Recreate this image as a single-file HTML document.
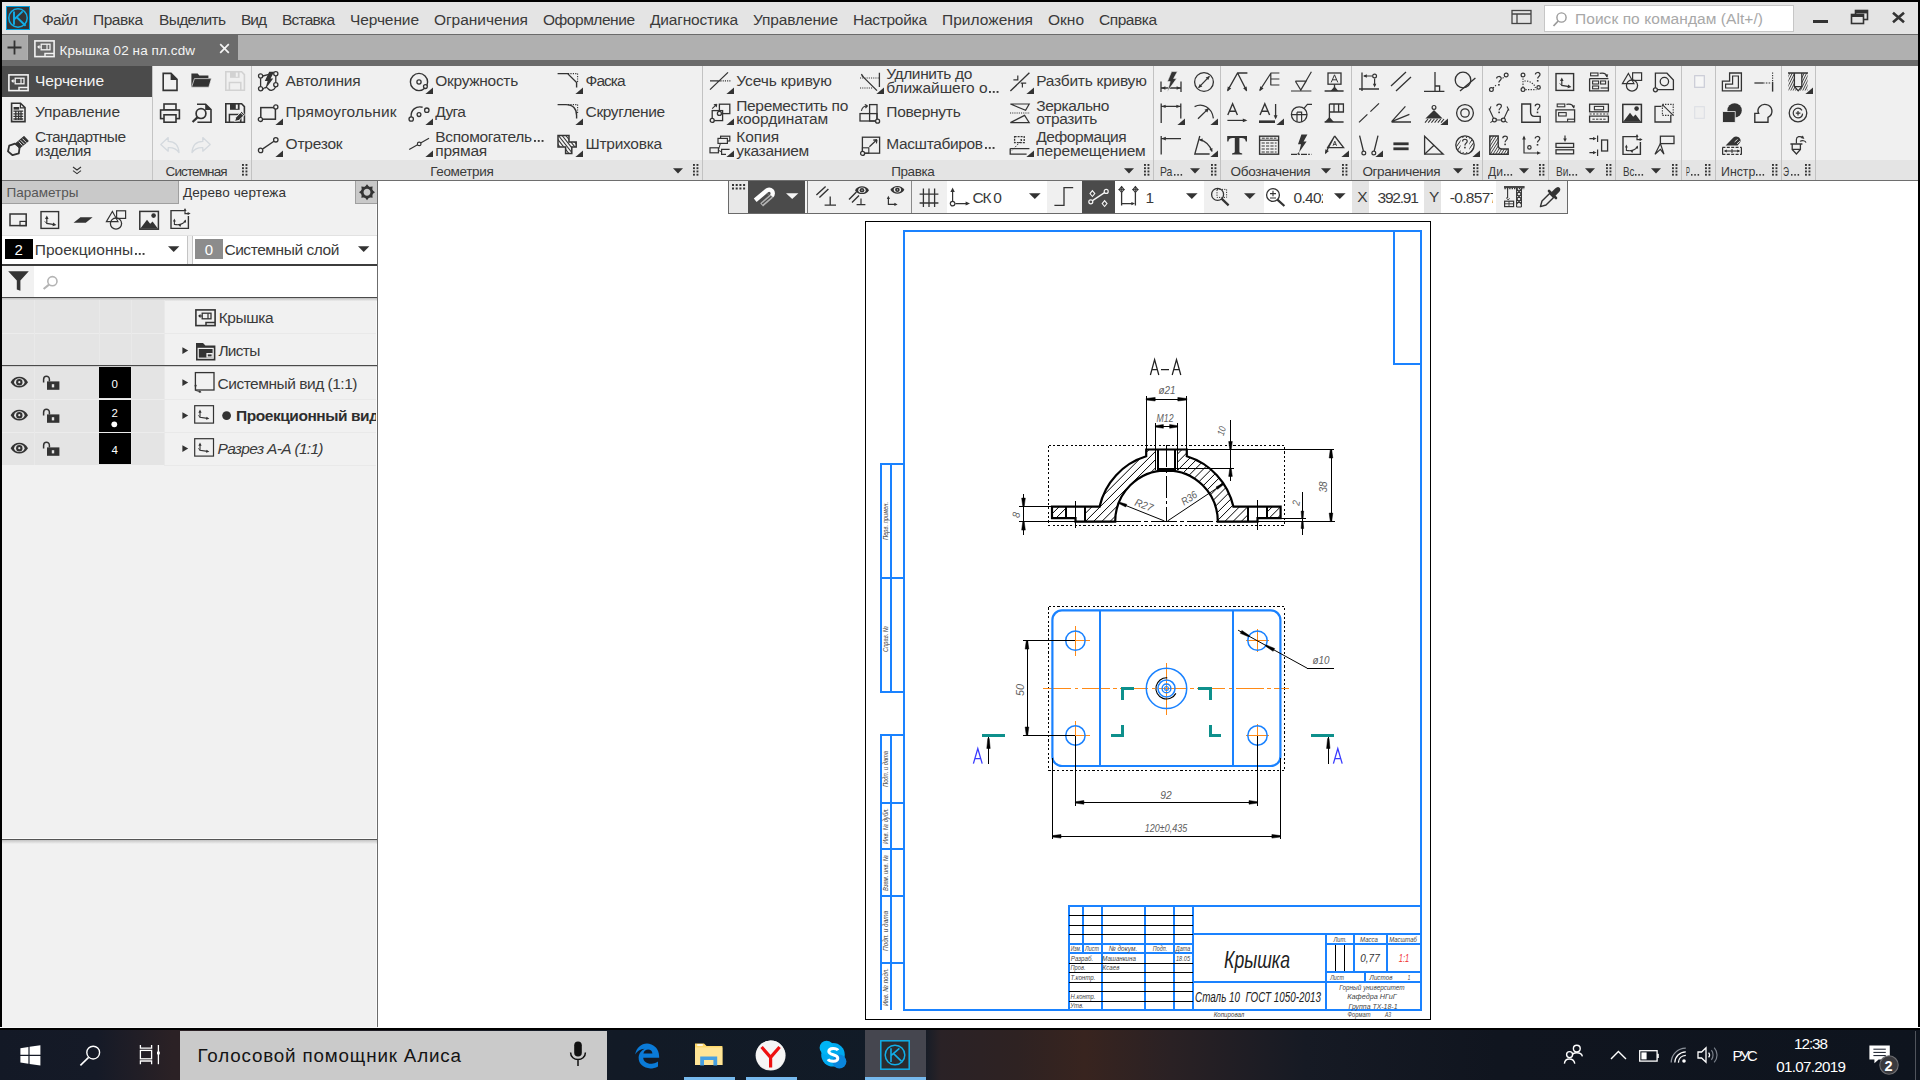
<!DOCTYPE html>
<html><head><meta charset="utf-8"><title>KOMPAS</title>
<style>
html,body{margin:0;padding:0;}
body{width:1920px;height:1080px;overflow:hidden;position:relative;background:#000;font-family:"Liberation Sans",sans-serif;color:#333;}
.t{position:absolute;white-space:nowrap;line-height:1.2;}
.r{position:absolute;display:block;}
svg{overflow:visible;}
.i{fill:none;stroke:#333;stroke-width:1.4;}
.f{fill:#333;stroke:none;}
</style></head><body>
<div class="r" style="left:2px;top:2px;width:1916px;height:32px;background:#e4e4e4;"></div>
<div class="r" style="left:2px;top:34px;width:1916px;height:1px;background:#6b6b6b;"></div>
<div class="r" style="left:2px;top:35px;width:1916px;height:25px;background:#b0b0b0;"></div>
<div class="r" style="left:2px;top:60px;width:1916px;height:6px;background:#6b6b6b;"></div>
<div class="r" style="left:28px;top:34px;width:210px;height:32px;background:#6b6b6b;"></div>
<div class="r" style="left:2px;top:35px;width:25px;height:25px;background:#a9a9a9;"></div>
<div class="r" style="left:2px;top:66px;width:1916px;height:94px;background:#f0f0f0;"></div>
<div class="r" style="left:2px;top:160px;width:1916px;height:20px;background:#e4e4e4;"></div>
<div class="r" style="left:2px;top:180px;width:1916px;height:1px;background:#6e6e6e;"></div>
<div class="r" style="left:2px;top:181px;width:376px;height:847px;background:#f0f0f0;"></div>
<div class="r" style="left:378px;top:181px;width:1540px;height:847px;background:#ffffff;"></div>
<div class="r" style="left:377px;top:181px;width:1px;height:847px;background:#8a8a8a;"></div>
<svg class="r" style="left:6px;top:6px;" width="24" height="24" viewBox="0 0 24 24"><rect x="0" y="0" width="24" height="24" fill="#00a0e0"/><rect x="1" y="1" width="22" height="22" fill="#333538"/>
<circle cx="12" cy="12" r="9.2" fill="none" stroke="#12aee8" stroke-width="1.5"/>
<path d="M8 5.4V18.8M8.2 13.4L16.6 5.4M10.8 11.2L19.6 19.8" fill="none" stroke="#12aee8" stroke-width="1.9"/></svg>
<span class="t" style="left:42px;top:10.88px;font-size:15.5px;letter-spacing:-0.702px;color:#3a3a3a;">Файл</span>
<span class="t" style="left:93px;top:10.88px;font-size:15.5px;letter-spacing:-0.472px;color:#3a3a3a;">Правка</span>
<span class="t" style="left:159px;top:10.88px;font-size:15.5px;letter-spacing:-0.644px;color:#3a3a3a;">Выделить</span>
<span class="t" style="left:241px;top:10.88px;font-size:15.5px;letter-spacing:-1.020px;color:#3a3a3a;">Вид</span>
<span class="t" style="left:282px;top:10.88px;font-size:15.5px;letter-spacing:-0.768px;color:#3a3a3a;">Вставка</span>
<span class="t" style="left:350px;top:10.88px;font-size:15.5px;letter-spacing:-0.109px;color:#3a3a3a;">Черчение</span>
<span class="t" style="left:434px;top:10.88px;font-size:15.5px;letter-spacing:-0.047px;color:#3a3a3a;">Ограничения</span>
<span class="t" style="left:543px;top:10.88px;font-size:15.5px;letter-spacing:-0.468px;color:#3a3a3a;">Оформление</span>
<span class="t" style="left:650px;top:10.88px;font-size:15.5px;letter-spacing:-0.186px;color:#3a3a3a;">Диагностика</span>
<span class="t" style="left:753px;top:10.88px;font-size:15.5px;letter-spacing:-0.129px;color:#3a3a3a;">Управление</span>
<span class="t" style="left:853px;top:10.88px;font-size:15.5px;letter-spacing:-0.288px;color:#3a3a3a;">Настройка</span>
<span class="t" style="left:942px;top:10.88px;font-size:15.5px;letter-spacing:0.035px;color:#3a3a3a;">Приложения</span>
<span class="t" style="left:1048px;top:10.88px;font-size:15.5px;letter-spacing:-0.006px;color:#3a3a3a;">Окно</span>
<span class="t" style="left:1099px;top:10.88px;font-size:15.5px;letter-spacing:-0.467px;color:#3a3a3a;">Справка</span>
<svg class="r" style="left:1511px;top:8px;" width="22" height="18" viewBox="0 0 22 18"><rect x="1" y="2.5" width="19" height="13" fill="none" stroke="#444" stroke-width="1.3"/><path d="M1 6H20M6 6V15.5" stroke="#444" stroke-width="1.3" fill="none"/></svg>
<div class="r" style="left:1544px;top:4.5px;width:250px;height:27px;background:#c6c6c6;"></div>
<div class="r" style="left:1545px;top:5.5px;width:248px;height:25px;background:#ffffff;"></div>
<svg class="r" style="left:1552px;top:10px;" width="16" height="18" viewBox="0 0 16 18"><circle cx="9.5" cy="7.5" r="4.6" fill="none" stroke="#9a9a9a" stroke-width="1.4"/><path d="M6.2 11L1.5 16" stroke="#9a9a9a" stroke-width="1.8"/></svg>
<span class="t" style="left:1575px;top:9.58px;font-size:15.5px;letter-spacing:0.067px;color:#a8a8a8;">Поиск по командам (Alt+/)</span>
<div class="r" style="left:1813px;top:20px;width:15px;height:3px;background:#333;"></div>
<svg class="r" style="left:1850px;top:9px;" width="20" height="16" viewBox="0 0 20 16"><rect x="5.5" y="1.5" width="12" height="9" fill="#e4e4e4" stroke="#333" stroke-width="1.6"/><rect x="5" y="1" width="13" height="3.4" fill="#333"/><rect x="1.5" y="5.5" width="12" height="9" fill="#e4e4e4" stroke="#333" stroke-width="1.6"/><rect x="1" y="5" width="13" height="3" fill="#333"/></svg>
<svg class="r" style="left:1892px;top:12px;" width="13" height="11" viewBox="0 0 13 11"><path d="M1 0.8L12 10.2M12 0.8L1 10.2" stroke="#333" stroke-width="2.6" fill="none"/></svg>
<svg class="r" style="left:2px;top:35px;" width="25" height="25" viewBox="0 0 25 25"><path d="M12.5 5.5V19.5M5.5 12.5H19.5" stroke="#333" stroke-width="1.8" fill="none"/></svg>
<svg class="r" style="left:34px;top:39.5px;" width="21" height="18" viewBox="0 0 21 18"><rect x="0.9" y="0.9" width="19.2" height="15.7" fill="none" stroke="#f2f2f2" stroke-width="1.6"/><rect x="7.2" y="4.2" width="8.8" height="5.6" fill="none" stroke="#f2f2f2" stroke-width="1.3"/><path d="M3.6 7H7.2M3.6 7L5.6 5.6M3.6 7L5.6 8.4" stroke="#f2f2f2" stroke-width="1.1" fill="none"/><path d="M13 4.2V9.8" stroke="#f2f2f2" stroke-width="1.2"/><path d="M11 16.4V13.4H20" stroke="#f2f2f2" stroke-width="1.5" fill="none"/></svg>
<span class="t" style="left:59.5px;top:42.67px;font-size:13.5px;letter-spacing:0.095px;color:#f4f4f4;">Крышка 02 на пл.cdw</span>
<svg class="r" style="left:219px;top:43px;" width="11" height="11" viewBox="0 0 11 11"><path d="M1.2 1.2L9.8 9.8M9.8 1.2L1.2 9.8" stroke="#f4f4f4" stroke-width="1.7" fill="none"/></svg>
<div class="r" style="left:2px;top:66px;width:150px;height:31px;background:#4b4b4b;"></div>
<div class="r" style="left:152px;top:66px;width:1px;height:114px;background:#c4c4c4;"></div>
<svg class="r" style="left:8px;top:73.5px;" width="21" height="18" viewBox="0 0 21 18"><rect x="0.9" y="0.9" width="19.2" height="15.7" fill="none" stroke="#f2f2f2" stroke-width="1.6"/><rect x="7.2" y="4.2" width="8.8" height="5.6" fill="none" stroke="#f2f2f2" stroke-width="1.3"/><path d="M3.6 7H7.2M3.6 7L5.6 5.6M3.6 7L5.6 8.4" stroke="#f2f2f2" stroke-width="1.1" fill="none"/><path d="M13 4.2V9.8" stroke="#f2f2f2" stroke-width="1.2"/><path d="M11 16.4V13.4H20" stroke="#f2f2f2" stroke-width="1.5" fill="none"/></svg>
<span class="t" style="left:35px;top:71.98px;font-size:15.5px;letter-spacing:-0.109px;color:#f4f4f4;">Черчение</span>
<span class="t" style="left:35px;top:102.98px;font-size:15.5px;letter-spacing:-0.129px;color:#3a3a3a;">Управление</span>
<span class="t" style="left:35px;top:127.78px;font-size:15.5px;letter-spacing:-0.566px;color:#3a3a3a;">Стандартные</span>
<span class="t" style="left:35px;top:141.98px;font-size:15.5px;letter-spacing:-0.361px;color:#3a3a3a;">изделия</span>
<svg class="r" style="left:10px;top:102px;" width="17" height="21" viewBox="0 0 17 21"><path d="M1.6 1.2H10.5L15 5.6V19.6H1.6Z" fill="none" stroke="#333" stroke-width="1.6"/><path d="M10.4 1.4V5.8H14.8" fill="none" stroke="#333" stroke-width="1.2"/><rect x="3.6" y="5" width="5.6" height="2.6" fill="#333"/><path d="M3.4 9.2H13.2M3.4 11.8H13.2M3.4 14.4H13.2M3.4 17H13.2M5.8 8.4V18M8.6 8.4V18M11 8.4V18" stroke="#333" stroke-width="1.3" fill="none"/></svg>
<svg class="r" style="left:6px;top:135px;" width="24" height="22" viewBox="0 0 24 22"><path d="M3.2 10.6L9 8.6L13.6 12.4L12.8 18.4L6.6 20.2L2 16.4Z" fill="#f0f0f0" stroke="#333" stroke-width="1.8" stroke-linejoin="round"/><path d="M10 8.4L18 1.6L22 6L13.4 13Z" fill="#333" stroke="#333" stroke-width="1.2" stroke-linejoin="round"/><path d="M14.5 5.2L18.5 9.2M16.4 3.6L20.4 7.6M12.8 6.6L16.4 10.6" stroke="#f0f0f0" stroke-width="0.9"/></svg>
<svg class="r" style="left:72px;top:166px;" width="10" height="9" viewBox="0 0 10 9"><path d="M1 1L5 4L9 1M1 4.6L5 7.6L9 4.6" stroke="#333" stroke-width="1.1" fill="none"/></svg>
<div class="r" style="left:251px;top:66px;width:1px;height:114px;background:#c2c2c2;"></div>
<div class="r" style="left:702px;top:66px;width:1px;height:114px;background:#c2c2c2;"></div>
<div class="r" style="left:1153px;top:66px;width:1px;height:114px;background:#c2c2c2;"></div>
<div class="r" style="left:1220px;top:66px;width:1px;height:114px;background:#c2c2c2;"></div>
<div class="r" style="left:1351px;top:66px;width:1px;height:114px;background:#c2c2c2;"></div>
<div class="r" style="left:1482px;top:66px;width:1px;height:114px;background:#c2c2c2;"></div>
<div class="r" style="left:1548px;top:66px;width:1px;height:114px;background:#c2c2c2;"></div>
<div class="r" style="left:1615px;top:66px;width:1px;height:114px;background:#c2c2c2;"></div>
<div class="r" style="left:1681px;top:66px;width:1px;height:114px;background:#c2c2c2;"></div>
<div class="r" style="left:1715px;top:66px;width:1px;height:114px;background:#c2c2c2;"></div>
<div class="r" style="left:1781px;top:66px;width:1px;height:114px;background:#c2c2c2;"></div>
<div class="r" style="left:1815px;top:66px;width:1px;height:114px;background:#c2c2c2;"></div>
<span class="t" style="left:165.6px;top:163.77px;font-size:13.5px;letter-spacing:-0.892px;color:#3a3a3a;">Системная</span>
<span class="t" style="left:430.2px;top:163.77px;font-size:13.5px;letter-spacing:-0.351px;color:#3a3a3a;">Геометрия</span>
<span class="t" style="left:891.2px;top:163.77px;font-size:13.5px;letter-spacing:-0.420px;color:#3a3a3a;">Правка</span>
<span class="t" style="left:1160.4px;top:164.25px;font-size:13px;transform:scaleX(0.8016);transform-origin:0 50%;color:#3a3a3a;">Ра</span>
<svg class="r" style="left:1174.2px;top:174.1px;" width="9" height="2" viewBox="0 0 9 2"><rect x="0.0" y="0" width="1.5" height="1.7" fill="#3a3a3a"/><rect x="3.3" y="0" width="1.5" height="1.7" fill="#3a3a3a"/><rect x="6.6" y="0" width="1.5" height="1.7" fill="#3a3a3a"/></svg>
<span class="t" style="left:1230.6px;top:163.77px;font-size:13.5px;letter-spacing:-0.329px;color:#3a3a3a;">Обозначения</span>
<span class="t" style="left:1362.5px;top:163.77px;font-size:13.5px;letter-spacing:-0.428px;color:#3a3a3a;">Ограничения</span>
<span class="t" style="left:1488px;top:164.25px;font-size:13px;transform:scaleX(0.9274);transform-origin:0 50%;color:#3a3a3a;">Ди</span>
<svg class="r" style="left:1504.3px;top:174.1px;" width="9" height="2" viewBox="0 0 9 2"><rect x="0.0" y="0" width="1.5" height="1.7" fill="#3a3a3a"/><rect x="3.3" y="0" width="1.5" height="1.7" fill="#3a3a3a"/><rect x="6.6" y="0" width="1.5" height="1.7" fill="#3a3a3a"/></svg>
<span class="t" style="left:1555.6px;top:164.25px;font-size:13px;transform:scaleX(0.7783);transform-origin:0 50%;color:#3a3a3a;">Ви</span>
<svg class="r" style="left:1569.4px;top:174.1px;" width="9" height="2" viewBox="0 0 9 2"><rect x="0.0" y="0" width="1.5" height="1.7" fill="#3a3a3a"/><rect x="3.3" y="0" width="1.5" height="1.7" fill="#3a3a3a"/><rect x="6.6" y="0" width="1.5" height="1.7" fill="#3a3a3a"/></svg>
<span class="t" style="left:1622.5px;top:164.25px;font-size:13px;transform:scaleX(0.7515);transform-origin:0 50%;color:#3a3a3a;">Вс</span>
<svg class="r" style="left:1635.3px;top:174.1px;" width="9" height="2" viewBox="0 0 9 2"><rect x="0.0" y="0" width="1.5" height="1.7" fill="#3a3a3a"/><rect x="3.3" y="0" width="1.5" height="1.7" fill="#3a3a3a"/><rect x="6.6" y="0" width="1.5" height="1.7" fill="#3a3a3a"/></svg>
<span class="t" style="left:1685.6px;top:164.25px;font-size:13px;transform:scaleX(0.4498);transform-origin:0 50%;color:#3a3a3a;">Р</span>
<svg class="r" style="left:1690.9px;top:174.1px;" width="9" height="2" viewBox="0 0 9 2"><rect x="0.0" y="0" width="1.5" height="1.7" fill="#3a3a3a"/><rect x="3.3" y="0" width="1.5" height="1.7" fill="#3a3a3a"/><rect x="6.6" y="0" width="1.5" height="1.7" fill="#3a3a3a"/></svg>
<span class="t" style="left:1720.6px;top:164.25px;font-size:13px;transform:scaleX(0.9501);transform-origin:0 50%;color:#3a3a3a;">Инстр</span>
<svg class="r" style="left:1756.4px;top:174.1px;" width="9" height="2" viewBox="0 0 9 2"><rect x="0.0" y="0" width="1.5" height="1.7" fill="#3a3a3a"/><rect x="3.3" y="0" width="1.5" height="1.7" fill="#3a3a3a"/><rect x="6.6" y="0" width="1.5" height="1.7" fill="#3a3a3a"/></svg>
<span class="t" style="left:1783.4px;top:164.25px;font-size:13px;transform:scaleX(0.6421);transform-origin:0 50%;color:#3a3a3a;">Э</span>
<svg class="r" style="left:1790.8px;top:174.1px;" width="9" height="2" viewBox="0 0 9 2"><rect x="0.0" y="0" width="1.5" height="1.7" fill="#3a3a3a"/><rect x="3.3" y="0" width="1.5" height="1.7" fill="#3a3a3a"/><rect x="6.6" y="0" width="1.5" height="1.7" fill="#3a3a3a"/></svg>
<svg class="r" style="left:241.9px;top:164px;" width="6" height="12" viewBox="0 0 6 12"><rect x="0" y="0" width="1.9" height="1.9" fill="#333"/><rect x="0" y="3.25" width="1.9" height="1.9" fill="#333"/><rect x="0" y="6.5" width="1.9" height="1.9" fill="#333"/><rect x="0" y="9.75" width="1.9" height="1.9" fill="#333"/><rect x="3.5" y="0" width="1.9" height="1.9" fill="#333"/><rect x="3.5" y="3.25" width="1.9" height="1.9" fill="#333"/><rect x="3.5" y="6.5" width="1.9" height="1.9" fill="#333"/><rect x="3.5" y="9.75" width="1.9" height="1.9" fill="#333"/></svg>
<svg class="r" style="left:692.75px;top:164px;" width="6" height="12" viewBox="0 0 6 12"><rect x="0" y="0" width="1.9" height="1.9" fill="#333"/><rect x="0" y="3.25" width="1.9" height="1.9" fill="#333"/><rect x="0" y="6.5" width="1.9" height="1.9" fill="#333"/><rect x="0" y="9.75" width="1.9" height="1.9" fill="#333"/><rect x="3.5" y="0" width="1.9" height="1.9" fill="#333"/><rect x="3.5" y="3.25" width="1.9" height="1.9" fill="#333"/><rect x="3.5" y="6.5" width="1.9" height="1.9" fill="#333"/><rect x="3.5" y="9.75" width="1.9" height="1.9" fill="#333"/></svg>
<svg class="r" style="left:1143.75px;top:164px;" width="6" height="12" viewBox="0 0 6 12"><rect x="0" y="0" width="1.9" height="1.9" fill="#333"/><rect x="0" y="3.25" width="1.9" height="1.9" fill="#333"/><rect x="0" y="6.5" width="1.9" height="1.9" fill="#333"/><rect x="0" y="9.75" width="1.9" height="1.9" fill="#333"/><rect x="3.5" y="0" width="1.9" height="1.9" fill="#333"/><rect x="3.5" y="3.25" width="1.9" height="1.9" fill="#333"/><rect x="3.5" y="6.5" width="1.9" height="1.9" fill="#333"/><rect x="3.5" y="9.75" width="1.9" height="1.9" fill="#333"/></svg>
<svg class="r" style="left:1211px;top:164px;" width="6" height="12" viewBox="0 0 6 12"><rect x="0" y="0" width="1.9" height="1.9" fill="#333"/><rect x="0" y="3.25" width="1.9" height="1.9" fill="#333"/><rect x="0" y="6.5" width="1.9" height="1.9" fill="#333"/><rect x="0" y="9.75" width="1.9" height="1.9" fill="#333"/><rect x="3.5" y="0" width="1.9" height="1.9" fill="#333"/><rect x="3.5" y="3.25" width="1.9" height="1.9" fill="#333"/><rect x="3.5" y="6.5" width="1.9" height="1.9" fill="#333"/><rect x="3.5" y="9.75" width="1.9" height="1.9" fill="#333"/></svg>
<svg class="r" style="left:1341.5px;top:164px;" width="6" height="12" viewBox="0 0 6 12"><rect x="0" y="0" width="1.9" height="1.9" fill="#333"/><rect x="0" y="3.25" width="1.9" height="1.9" fill="#333"/><rect x="0" y="6.5" width="1.9" height="1.9" fill="#333"/><rect x="0" y="9.75" width="1.9" height="1.9" fill="#333"/><rect x="3.5" y="0" width="1.9" height="1.9" fill="#333"/><rect x="3.5" y="3.25" width="1.9" height="1.9" fill="#333"/><rect x="3.5" y="6.5" width="1.9" height="1.9" fill="#333"/><rect x="3.5" y="9.75" width="1.9" height="1.9" fill="#333"/></svg>
<svg class="r" style="left:1472.9px;top:164px;" width="6" height="12" viewBox="0 0 6 12"><rect x="0" y="0" width="1.9" height="1.9" fill="#333"/><rect x="0" y="3.25" width="1.9" height="1.9" fill="#333"/><rect x="0" y="6.5" width="1.9" height="1.9" fill="#333"/><rect x="0" y="9.75" width="1.9" height="1.9" fill="#333"/><rect x="3.5" y="0" width="1.9" height="1.9" fill="#333"/><rect x="3.5" y="3.25" width="1.9" height="1.9" fill="#333"/><rect x="3.5" y="6.5" width="1.9" height="1.9" fill="#333"/><rect x="3.5" y="9.75" width="1.9" height="1.9" fill="#333"/></svg>
<svg class="r" style="left:1539px;top:164px;" width="6" height="12" viewBox="0 0 6 12"><rect x="0" y="0" width="1.9" height="1.9" fill="#333"/><rect x="0" y="3.25" width="1.9" height="1.9" fill="#333"/><rect x="0" y="6.5" width="1.9" height="1.9" fill="#333"/><rect x="0" y="9.75" width="1.9" height="1.9" fill="#333"/><rect x="3.5" y="0" width="1.9" height="1.9" fill="#333"/><rect x="3.5" y="3.25" width="1.9" height="1.9" fill="#333"/><rect x="3.5" y="6.5" width="1.9" height="1.9" fill="#333"/><rect x="3.5" y="9.75" width="1.9" height="1.9" fill="#333"/></svg>
<svg class="r" style="left:1606px;top:164px;" width="6" height="12" viewBox="0 0 6 12"><rect x="0" y="0" width="1.9" height="1.9" fill="#333"/><rect x="0" y="3.25" width="1.9" height="1.9" fill="#333"/><rect x="0" y="6.5" width="1.9" height="1.9" fill="#333"/><rect x="0" y="9.75" width="1.9" height="1.9" fill="#333"/><rect x="3.5" y="0" width="1.9" height="1.9" fill="#333"/><rect x="3.5" y="3.25" width="1.9" height="1.9" fill="#333"/><rect x="3.5" y="6.5" width="1.9" height="1.9" fill="#333"/><rect x="3.5" y="9.75" width="1.9" height="1.9" fill="#333"/></svg>
<svg class="r" style="left:1672px;top:164px;" width="6" height="12" viewBox="0 0 6 12"><rect x="0" y="0" width="1.9" height="1.9" fill="#333"/><rect x="0" y="3.25" width="1.9" height="1.9" fill="#333"/><rect x="0" y="6.5" width="1.9" height="1.9" fill="#333"/><rect x="0" y="9.75" width="1.9" height="1.9" fill="#333"/><rect x="3.5" y="0" width="1.9" height="1.9" fill="#333"/><rect x="3.5" y="3.25" width="1.9" height="1.9" fill="#333"/><rect x="3.5" y="6.5" width="1.9" height="1.9" fill="#333"/><rect x="3.5" y="9.75" width="1.9" height="1.9" fill="#333"/></svg>
<svg class="r" style="left:1705px;top:164px;" width="6" height="12" viewBox="0 0 6 12"><rect x="0" y="0" width="1.9" height="1.9" fill="#333"/><rect x="0" y="3.25" width="1.9" height="1.9" fill="#333"/><rect x="0" y="6.5" width="1.9" height="1.9" fill="#333"/><rect x="0" y="9.75" width="1.9" height="1.9" fill="#333"/><rect x="3.5" y="0" width="1.9" height="1.9" fill="#333"/><rect x="3.5" y="3.25" width="1.9" height="1.9" fill="#333"/><rect x="3.5" y="6.5" width="1.9" height="1.9" fill="#333"/><rect x="3.5" y="9.75" width="1.9" height="1.9" fill="#333"/></svg>
<svg class="r" style="left:1772px;top:164px;" width="6" height="12" viewBox="0 0 6 12"><rect x="0" y="0" width="1.9" height="1.9" fill="#333"/><rect x="0" y="3.25" width="1.9" height="1.9" fill="#333"/><rect x="0" y="6.5" width="1.9" height="1.9" fill="#333"/><rect x="0" y="9.75" width="1.9" height="1.9" fill="#333"/><rect x="3.5" y="0" width="1.9" height="1.9" fill="#333"/><rect x="3.5" y="3.25" width="1.9" height="1.9" fill="#333"/><rect x="3.5" y="6.5" width="1.9" height="1.9" fill="#333"/><rect x="3.5" y="9.75" width="1.9" height="1.9" fill="#333"/></svg>
<svg class="r" style="left:1804.5px;top:164px;" width="6" height="12" viewBox="0 0 6 12"><rect x="0" y="0" width="1.9" height="1.9" fill="#333"/><rect x="0" y="3.25" width="1.9" height="1.9" fill="#333"/><rect x="0" y="6.5" width="1.9" height="1.9" fill="#333"/><rect x="0" y="9.75" width="1.9" height="1.9" fill="#333"/><rect x="3.5" y="0" width="1.9" height="1.9" fill="#333"/><rect x="3.5" y="3.25" width="1.9" height="1.9" fill="#333"/><rect x="3.5" y="6.5" width="1.9" height="1.9" fill="#333"/><rect x="3.5" y="9.75" width="1.9" height="1.9" fill="#333"/></svg>
<svg class="r" style="left:673px;top:168px;" width="10" height="6" viewBox="0 0 10 6"><path d="M0 0.2H10L5 5.4Z" fill="#333"/></svg>
<svg class="r" style="left:1124.2px;top:168px;" width="10" height="6" viewBox="0 0 10 6"><path d="M0 0.2H10L5 5.4Z" fill="#333"/></svg>
<svg class="r" style="left:1190px;top:168px;" width="10" height="6" viewBox="0 0 10 6"><path d="M0 0.2H10L5 5.4Z" fill="#333"/></svg>
<svg class="r" style="left:1320.8px;top:168px;" width="10" height="6" viewBox="0 0 10 6"><path d="M0 0.2H10L5 5.4Z" fill="#333"/></svg>
<svg class="r" style="left:1453px;top:168px;" width="10" height="6" viewBox="0 0 10 6"><path d="M0 0.2H10L5 5.4Z" fill="#333"/></svg>
<svg class="r" style="left:1519px;top:168px;" width="10" height="6" viewBox="0 0 10 6"><path d="M0 0.2H10L5 5.4Z" fill="#333"/></svg>
<svg class="r" style="left:1585px;top:168px;" width="10" height="6" viewBox="0 0 10 6"><path d="M0 0.2H10L5 5.4Z" fill="#333"/></svg>
<svg class="r" style="left:1651px;top:168px;" width="10" height="6" viewBox="0 0 10 6"><path d="M0 0.2H10L5 5.4Z" fill="#333"/></svg>
<span class="t" style="left:285.6px;top:71.88px;font-size:15.5px;letter-spacing:-0.219px;color:#3a3a3a;">Автолиния</span>
<span class="t" style="left:285.6px;top:103.08px;font-size:15.5px;letter-spacing:0.121px;color:#3a3a3a;">Прямоугольник</span>
<span class="t" style="left:285.6px;top:134.98px;font-size:15.5px;letter-spacing:-0.232px;color:#3a3a3a;">Отрезок</span>
<span class="t" style="left:435.25px;top:71.88px;font-size:15.5px;letter-spacing:-0.298px;color:#3a3a3a;">Окружность</span>
<span class="t" style="left:435.25px;top:103.08px;font-size:15.5px;letter-spacing:-0.673px;color:#3a3a3a;">Дуга</span>
<span class="t" style="left:435.25px;top:127.78px;font-size:15.5px;letter-spacing:-0.302px;color:#3a3a3a;">Вспомогатель</span>
<svg class="r" style="left:533.65px;top:139.7px;" width="11" height="2" viewBox="0 0 11 2"><rect x="0.0" y="0" width="1.9" height="1.9" fill="#3a3a3a"/><rect x="3.8" y="0" width="1.9" height="1.9" fill="#3a3a3a"/><rect x="7.6" y="0" width="1.9" height="1.9" fill="#3a3a3a"/></svg>
<span class="t" style="left:435.25px;top:141.88px;font-size:15.5px;letter-spacing:-0.181px;color:#3a3a3a;">прямая</span>
<span class="t" style="left:585.6px;top:71.88px;font-size:15.5px;letter-spacing:-0.974px;color:#3a3a3a;">Фаска</span>
<span class="t" style="left:585.6px;top:103.08px;font-size:15.5px;letter-spacing:-0.387px;color:#3a3a3a;">Скругление</span>
<span class="t" style="left:585.6px;top:134.98px;font-size:15.5px;letter-spacing:-0.282px;color:#3a3a3a;">Штриховка</span>
<span class="t" style="left:736.25px;top:71.88px;font-size:15.5px;letter-spacing:-0.086px;color:#3a3a3a;">Усечь кривую</span>
<span class="t" style="left:736.25px;top:96.88px;font-size:15.5px;letter-spacing:-0.329px;color:#3a3a3a;">Переместить по</span>
<span class="t" style="left:736.25px;top:109.98px;font-size:15.5px;letter-spacing:-0.120px;color:#3a3a3a;">координатам</span>
<span class="t" style="left:736.25px;top:127.78px;font-size:15.5px;letter-spacing:-0.024px;color:#3a3a3a;">Копия</span>
<span class="t" style="left:736.25px;top:141.88px;font-size:15.5px;letter-spacing:-0.317px;color:#3a3a3a;">указанием</span>
<span class="t" style="left:886.25px;top:64.98px;font-size:15.5px;letter-spacing:-0.374px;color:#3a3a3a;">Удлинить до</span>
<span class="t" style="left:886.25px;top:78.78px;font-size:15.5px;letter-spacing:-0.013px;color:#3a3a3a;">ближайшего о</span>
<svg class="r" style="left:989.15px;top:90.7px;" width="11" height="2" viewBox="0 0 11 2"><rect x="0.0" y="0" width="1.9" height="1.9" fill="#3a3a3a"/><rect x="3.8" y="0" width="1.9" height="1.9" fill="#3a3a3a"/><rect x="7.6" y="0" width="1.9" height="1.9" fill="#3a3a3a"/></svg>
<span class="t" style="left:886.25px;top:103.08px;font-size:15.5px;letter-spacing:-0.256px;color:#3a3a3a;">Повернуть</span>
<span class="t" style="left:886.25px;top:134.98px;font-size:15.5px;letter-spacing:-0.365px;color:#3a3a3a;">Масштабиров</span>
<svg class="r" style="left:984.65px;top:146.9px;" width="11" height="2" viewBox="0 0 11 2"><rect x="0.0" y="0" width="1.9" height="1.9" fill="#3a3a3a"/><rect x="3.8" y="0" width="1.9" height="1.9" fill="#3a3a3a"/><rect x="7.6" y="0" width="1.9" height="1.9" fill="#3a3a3a"/></svg>
<span class="t" style="left:1036.25px;top:71.88px;font-size:15.5px;letter-spacing:-0.234px;color:#3a3a3a;">Разбить кривую</span>
<span class="t" style="left:1036.25px;top:96.88px;font-size:15.5px;letter-spacing:-0.455px;color:#3a3a3a;">Зеркально</span>
<span class="t" style="left:1036.25px;top:109.98px;font-size:15.5px;letter-spacing:-0.340px;color:#3a3a3a;">отразить</span>
<span class="t" style="left:1036.25px;top:127.78px;font-size:15.5px;letter-spacing:-0.424px;color:#3a3a3a;">Деформация</span>
<span class="t" style="left:1036.25px;top:141.88px;font-size:15.5px;letter-spacing:-0.157px;color:#3a3a3a;">перемещением</span>
<svg class="r" style="left:157.5px;top:69.5px;" width="24" height="24" viewBox="0 0 24 24"><path d="M5.2 3.4H13L19 9.4V20.4H5.2Z" fill="#f0f0f0" stroke="#333" stroke-width="1.6" stroke-linejoin="miter"/><path d="M12.6 3V10H19.4Z" fill="#333"/></svg>
<svg class="r" style="left:189.2px;top:67.6px;" width="24" height="24" viewBox="0 0 24 24"><path d="M2.4 5.4H8.6L10.4 7.4H19.4V10H22L19.6 19H2.4Z" fill="#333"/><path d="M5.4 10.6H22.4L19.8 19.2H2.6Z" fill="#333" stroke="#f0f0f0" stroke-width="0.7"/></svg>
<svg class="r" style="left:222.6px;top:69.4px;" width="24" height="24" viewBox="0 0 24 24"><path d="M2.8 2.8H18.6L21.4 5.6V21.2H2.8Z" fill="none" stroke="#d2d2d2" stroke-width="1.6"/><rect x="7" y="2.8" width="9.6" height="6" fill="#d2d2d2"/><rect x="12.8" y="3.6" width="2" height="4.2" fill="#f0f0f0"/><path d="M6.4 21V13.4H17.8V21" fill="none" stroke="#d2d2d2" stroke-width="1.5"/></svg>
<svg class="r" style="left:222.6px;top:100.6px;" width="24" height="24" viewBox="0 0 24 24"><path d="M2.8 2.8H18.6L21.4 5.6V21.2H2.8Z" fill="none" stroke="#333" stroke-width="1.6"/><rect x="7" y="2.8" width="9.6" height="6" fill="#333"/><rect x="12.8" y="3.6" width="2" height="4.2" fill="#f0f0f0"/><path d="M6.4 21V13.4H17.8V21" fill="none" stroke="#333" stroke-width="1.5"/><path d="M11.6 20.4L12.8 16.4L18.6 10.4L21.8 13.6L16 19.4Z" fill="#333" stroke="#f0f0f0" stroke-width="0.9"/><path d="M17.4 11.6L20.6 14.8" stroke="#f0f0f0" stroke-width="0.9"/></svg>
<svg class="r" style="left:157.6px;top:100.5px;" width="24" height="24" viewBox="0 0 24 24"><rect x="6" y="3" width="12" height="6" fill="#f0f0f0" stroke="#333" stroke-width="1.6"/><rect x="2.6" y="9" width="18.8" height="8.6" fill="#f0f0f0" stroke="#333" stroke-width="1.6"/><rect x="6" y="13.8" width="12" height="7.4" fill="#f0f0f0" stroke="#333" stroke-width="1.6"/></svg>
<svg class="r" style="left:190.0px;top:100.5px;" width="24" height="24" viewBox="0 0 24 24"><path d="M7 3.2H15.6L21 8.6V21.2H7.4" fill="none" stroke="#333" stroke-width="1.6"/><path d="M15.2 3V9H21.2Z" fill="#333"/><circle cx="11" cy="12.6" r="4.9" fill="#f0f0f0" stroke="#333" stroke-width="1.7"/><path d="M7.4 16.4L2.6 21" stroke="#333" stroke-width="2.2"/></svg>
<svg class="r" style="left:157.8px;top:132.6px;" width="24" height="24" viewBox="0 0 24 24"><path d="M2.8 11.4L10.2 4.6V8.4C16.6 8.6 20.6 12.6 21 19.6C18.6 15.8 15 14.4 10.2 14.6V18.2Z" fill="none" stroke="#d4d9de" stroke-width="1.3" stroke-linejoin="round"/></svg>
<svg class="r" style="left:189.2px;top:132.6px;" width="24" height="24" viewBox="0 0 24 24"><path d="M21.2 11.4L13.8 4.6V8.4C7.4 8.6 3.4 12.6 3 19.6C5.4 15.8 9 14.4 13.8 14.6V18.2Z" fill="none" stroke="#d4d9de" stroke-width="1.3" stroke-linejoin="round"/></svg>
<svg class="r" style="left:256.4px;top:69.3px;" width="24" height="24" viewBox="0 0 24 24"><path d="M4.6 9.2V17.4M6.8 7L13 5.4M19.8 7V13.4M5.8 21.2C9 17.5 10.5 17.6 12.4 20C14.4 22.4 17.8 21.5 19.6 18" fill="none" stroke="#333" stroke-width="1.3"/><path d="M13.2 2.8H18.2L14.6 9.4H17.2L9.2 20.2L11.6 12H8.8Z" fill="#333"/><circle cx="4.6" cy="7" r="2.1" fill="#f0f0f0" stroke="#333" stroke-width="1.3"/><circle cx="19.8" cy="4.7" r="2.1" fill="#f0f0f0" stroke="#333" stroke-width="1.3"/><circle cx="19.8" cy="15.7" r="2.1" fill="#f0f0f0" stroke="#333" stroke-width="1.3"/><circle cx="4.6" cy="19.7" r="2.1" fill="#f0f0f0" stroke="#333" stroke-width="1.3"/></svg>
<svg class="r" style="left:256.4px;top:100.5px;" width="24" height="24" viewBox="0 0 24 24"><rect x="4.8" y="6.6" width="14.6" height="11.6" fill="none" stroke="#333" stroke-width="1.5"/><circle cx="19.8" cy="6" r="2.1" fill="#f0f0f0" stroke="#333" stroke-width="1.3"/><circle cx="4.4" cy="18.4" r="2.1" fill="#f0f0f0" stroke="#333" stroke-width="1.3"/></svg>
<svg class="r" style="left:274.8px;top:117.8px;" width="8" height="7" viewBox="0 0 8 7"><path d="M8 0.4V7H0.4Z" fill="#333"/></svg>
<svg class="r" style="left:256.4px;top:132.5px;" width="24" height="24" viewBox="0 0 24 24"><path d="M4.6 17.4L19.8 7" fill="none" stroke="#333" stroke-width="1.4"/><circle cx="19.8" cy="6.8" r="2.2" fill="#f0f0f0" stroke="#333" stroke-width="1.3"/><circle cx="4.6" cy="17.4" r="2.2" fill="#f0f0f0" stroke="#333" stroke-width="1.3"/></svg>
<svg class="r" style="left:274.8px;top:149.9px;" width="8" height="7" viewBox="0 0 8 7"><path d="M8 0.4V7H0.4Z" fill="#333"/></svg>
<svg class="r" style="left:406.5px;top:69.5px;" width="24" height="24" viewBox="0 0 24 24"><circle cx="12" cy="12" r="8.6" fill="none" stroke="#333" stroke-width="1.4"/><circle cx="12" cy="12" r="2.1" fill="none" stroke="#333" stroke-width="1.3"/><circle cx="18.4" cy="16.6" r="1.9" fill="#f0f0f0" stroke="#333" stroke-width="1.3"/></svg>
<svg class="r" style="left:424.9px;top:86.8px;" width="8" height="7" viewBox="0 0 8 7"><path d="M8 0.4V7H0.4Z" fill="#333"/></svg>
<svg class="r" style="left:406.5px;top:100.5px;" width="24" height="24" viewBox="0 0 24 24"><path d="M4.2 16C3.4 9 9 4.6 15.6 6.2" fill="none" stroke="#333" stroke-width="1.4"/><circle cx="19.8" cy="9.2" r="2.2" fill="#f0f0f0" stroke="#333" stroke-width="1.3"/><circle cx="12" cy="13.6" r="1.9" fill="#f0f0f0" stroke="#333" stroke-width="1.3"/><circle cx="4.2" cy="18" r="2.2" fill="#f0f0f0" stroke="#333" stroke-width="1.3"/></svg>
<svg class="r" style="left:424.9px;top:117.8px;" width="8" height="7" viewBox="0 0 8 7"><path d="M8 0.4V7H0.4Z" fill="#333"/></svg>
<svg class="r" style="left:406.5px;top:132.2px;" width="24" height="24" viewBox="0 0 24 24"><path d="M2.2 17.6L22 6.2" fill="none" stroke="#333" stroke-width="1.2"/><circle cx="12.2" cy="11.9" r="1.8" fill="#f0f0f0" stroke="#333" stroke-width="1.2"/></svg>
<svg class="r" style="left:424.9px;top:149.9px;" width="8" height="7" viewBox="0 0 8 7"><path d="M8 0.4V7H0.4Z" fill="#333"/></svg>
<svg class="r" style="left:556.4px;top:69.5px;" width="24" height="24" viewBox="0 0 24 24"><path d="M1.6 3.6H11.6L20.6 12.6V17.6" fill="none" stroke="#333" stroke-width="1.4"/><path d="M12 3.6H21.6V12.4" fill="none" stroke="#333" stroke-width="1.1" stroke-dasharray="1.2 1.2"/></svg>
<svg class="r" style="left:574.9px;top:86.8px;" width="8" height="7" viewBox="0 0 8 7"><path d="M8 0.4V7H0.4Z" fill="#333"/></svg>
<svg class="r" style="left:556.4px;top:100.5px;" width="24" height="24" viewBox="0 0 24 24"><path d="M1.6 3.6H10C17 3.6 20.6 8 20.6 14.4V17.6" fill="none" stroke="#333" stroke-width="1.4"/><path d="M12 3.6H21.6V12.4" fill="none" stroke="#333" stroke-width="1.1" stroke-dasharray="1.2 1.2"/></svg>
<svg class="r" style="left:574.9px;top:117.8px;" width="8" height="7" viewBox="0 0 8 7"><path d="M8 0.4V7H0.4Z" fill="#333"/></svg>
<svg class="r" style="left:556.4px;top:132.4px;" width="24" height="24" viewBox="0 0 24 24"><defs><clipPath id="hcl"><path d="M2 3.4H13V10H20V14.8H15.6V21.4H9.6V14.8H2Z"/></clipPath></defs><g clip-path="url(#hcl)"><path d="M-12.8 3L2.1999999999999993 22M-9.100000000000001 3L5.899999999999999 22M-5.4 3L9.6 22M-1.7000000000000002 3L13.3 22M2.0 3L17.0 22M5.7 3L20.7 22M9.4 3L24.4 22M13.100000000000001 3L28.1 22M16.8 3L31.8 22M20.5 3L35.5 22" stroke="#333" stroke-width="1.05"/></g><path d="M2 3.4H13V10H20.2V15H15.8V21.4H9.6V15H2Z" fill="none" stroke="#333" stroke-width="1.5"/></svg>
<svg class="r" style="left:574.9px;top:149.9px;" width="8" height="7" viewBox="0 0 8 7"><path d="M8 0.4V7H0.4Z" fill="#333"/></svg>
<svg class="r" style="left:707.5px;top:69.5px;" width="24" height="24" viewBox="0 0 24 24"><path d="M2 10.9H12.5M2 19.6L20 2.4" fill="none" stroke="#333" stroke-width="1.3"/><path d="M12.5 10.9H22.5" fill="none" stroke="#333" stroke-width="1.1" stroke-dasharray="1.1 1.1"/></svg>
<svg class="r" style="left:725.8px;top:86.8px;" width="8" height="7" viewBox="0 0 8 7"><path d="M8 0.4V7H0.4Z" fill="#333"/></svg>
<svg class="r" style="left:707.5px;top:100.5px;" width="24" height="24" viewBox="0 0 24 24"><rect x="11.4" y="3.2" width="10.4" height="9.4" fill="none" stroke="#333" stroke-width="1.3"/><rect x="4.2" y="9.6" width="10.4" height="10" fill="none" stroke="#333" stroke-width="1.3"/><path d="M4.2 7.6L8.6 3.4M8.8 3.2L5.8 3.8M8.8 3.2L8.2 6.2" fill="none" stroke="#333" stroke-width="1.1"/><circle cx="4.2" cy="19.4" r="2.0" fill="#f0f0f0" stroke="#333" stroke-width="1.3"/><circle cx="11.4" cy="12.4" r="2.0" fill="#f0f0f0" stroke="#333" stroke-width="1.3"/></svg>
<svg class="r" style="left:725.8px;top:117.8px;" width="8" height="7" viewBox="0 0 8 7"><path d="M8 0.4V7H0.4Z" fill="#333"/></svg>
<svg class="r" style="left:707.5px;top:132.5px;" width="24" height="24" viewBox="0 0 24 24"><rect x="12.6" y="3.2" width="9.2" height="4.8" fill="none" stroke="#333" stroke-width="1.2"/><rect x="10" y="5.4" width="9.4" height="5" fill="#f0f0f0" stroke="#333" stroke-width="1.2"/><rect x="2" y="14.8" width="8.4" height="5" fill="none" stroke="#333" stroke-width="1.2"/><path d="M21.6 16.4H13.6V21.4H18" fill="none" stroke="#333" stroke-width="1.2"/><path d="M10.4 17.2L12.4 10.4M10.4 17.4L13.6 18.8" fill="none" stroke="#333" stroke-width="1"/></svg>
<svg class="r" style="left:725.8px;top:149.9px;" width="8" height="7" viewBox="0 0 8 7"><path d="M8 0.4V7H0.4Z" fill="#333"/></svg>
<svg class="r" style="left:857.5px;top:69.5px;" width="24" height="24" viewBox="0 0 24 24"><path d="M21.4 2.8V17M3.6 5.4L19 20.6M3.4 4L5.6 7.4" fill="none" stroke="#333" stroke-width="1.3"/><path d="M2 8H21M2 18H14.5" fill="none" stroke="#333" stroke-width="1.1" stroke-dasharray="1.1 1.1"/></svg>
<svg class="r" style="left:875.8px;top:86.8px;" width="8" height="7" viewBox="0 0 8 7"><path d="M8 0.4V7H0.4Z" fill="#333"/></svg>
<svg class="r" style="left:857.5px;top:100.5px;" width="24" height="24" viewBox="0 0 24 24"><rect x="11.6" y="3.6" width="7.4" height="16.4" fill="none" stroke="#333" stroke-width="1.3"/><rect x="2" y="12.6" width="17" height="7.4" fill="none" stroke="#333" stroke-width="1.3"/><path d="M3.4 9.8C4 6.8 6 5 9.4 4.8M9.6 4.8L6.8 3.4M9.6 4.8L7.4 7" fill="none" stroke="#333" stroke-width="1.1"/><circle cx="19.6" cy="20.2" r="2.0" fill="#f0f0f0" stroke="#333" stroke-width="1.3"/></svg>
<svg class="r" style="left:857.5px;top:132.5px;" width="24" height="24" viewBox="0 0 24 24"><rect x="4.4" y="4.2" width="17.2" height="16" fill="none" stroke="#333" stroke-width="1.3"/><rect x="4.4" y="14.8" width="6.4" height="5.4" fill="none" stroke="#333" stroke-width="1.1"/><path d="M11.4 13.8L18.8 6.8M19 6.6L15.2 7.2M19 6.6L18.4 10.4" fill="none" stroke="#333" stroke-width="1.2"/><circle cx="4.6" cy="20.4" r="2.0" fill="#f0f0f0" stroke="#333" stroke-width="1.3"/></svg>
<svg class="r" style="left:1007.7px;top:69.5px;" width="24" height="24" viewBox="0 0 24 24"><path d="M2.4 21L21.4 2.8" fill="none" stroke="#333" stroke-width="1.4"/><path d="M9.8 5.6V9.8H5.4M12.8 13.2H18.2M14.4 13.2V17.6" fill="none" stroke="#333" stroke-width="1.2"/></svg>
<svg class="r" style="left:1026px;top:86.8px;" width="8" height="7" viewBox="0 0 8 7"><path d="M8 0.4V7H0.4Z" fill="#333"/></svg>
<svg class="r" style="left:1007.7px;top:100.5px;" width="24" height="24" viewBox="0 0 24 24"><path d="M2.4 3H21.2L17.6 9.2Z" fill="none" stroke="#333" stroke-width="1.2"/><path d="M2.4 21.6H21.2L16.6 14.4Z" fill="none" stroke="#333" stroke-width="1.2"/><path d="M2 12H22" fill="none" stroke="#333" stroke-width="1.1" stroke-dasharray="1.1 1.1"/></svg>
<svg class="r" style="left:1007.7px;top:132.5px;" width="24" height="24" viewBox="0 0 24 24"><rect x="6.6" y="3.6" width="9.6" height="6" fill="none" stroke="#333" stroke-width="1.3" stroke-dasharray="2 1"/><path d="M14 7L4 17.4" fill="none" stroke="#333" stroke-width="1" stroke-dasharray="1.5 1.2"/><path d="M2.2 15.6H21.4M2.2 15.6V21.2H18.6" fill="none" stroke="#333" stroke-width="1.3"/><circle cx="13.2" cy="6.8" r="0.9" fill="#333"/></svg>
<svg class="r" style="left:1026px;top:149.9px;" width="8" height="7" viewBox="0 0 8 7"><path d="M8 0.4V7H0.4Z" fill="#333"/></svg>
<svg class="r" style="left:1158.6px;top:69.5px;" width="24" height="24" viewBox="0 0 24 24"><path d="M2 11.6V22M22 11.6V22M2 18H22" fill="none" stroke="#333" stroke-width="1.3"/><path d="M2.40 18.00L6.40 16.30L6.40 19.70Z" fill="#333"/><path d="M21.60 18.00L17.60 19.70L17.60 16.30Z" fill="#333"/><path d="M12.6 1.6H18.4L14.6 8.6H17.6L8.4 21.4L11.2 11.6H8.4Z" fill="#333" stroke="#f0f0f0" stroke-width="0.6"/></svg>
<svg class="r" style="left:1191.75px;top:69.7px;" width="24" height="24" viewBox="0 0 24 24"><circle cx="12" cy="12" r="9.4" fill="none" stroke="#333" stroke-width="1.3"/><path d="M6.6 17.6L17.4 6.4" fill="none" stroke="#333" stroke-width="1.3"/><path d="M6.20 18.00L7.76 13.90L10.30 16.44Z" fill="#333"/><path d="M17.80 6.00L16.24 10.10L13.70 7.56Z" fill="#333"/></svg>
<svg class="r" style="left:1158.6px;top:100.5px;" width="24" height="24" viewBox="0 0 24 24"><path d="M2.2 2.6V22M21.8 2.6V17.6M2.2 5.4H21.8" fill="none" stroke="#333" stroke-width="1.3"/><path d="M2.60 5.40L6.60 3.70L6.60 7.10Z" fill="#333"/><path d="M21.40 5.40L17.40 7.10L17.40 3.70Z" fill="#333"/></svg>
<svg class="r" style="left:1176.6px;top:117.8px;" width="8" height="7" viewBox="0 0 8 7"><path d="M8 0.4V7H0.4Z" fill="#333"/></svg>
<svg class="r" style="left:1191.75px;top:100.5px;" width="24" height="24" viewBox="0 0 24 24"><path d="M2.6 5.6C10 1.6 20 6 21.4 17.4M6 17.8L16.4 7.6" fill="none" stroke="#333" stroke-width="1.3"/><path d="M17.00 7.00L15.30 11.53L12.47 8.70Z" fill="#333"/></svg>
<svg class="r" style="left:1209.6px;top:117.8px;" width="8" height="7" viewBox="0 0 8 7"><path d="M8 0.4V7H0.4Z" fill="#333"/></svg>
<svg class="r" style="left:1158.6px;top:132.5px;" width="24" height="24" viewBox="0 0 24 24"><path d="M2.2 3V21.4M2.2 5.6H22" fill="none" stroke="#333" stroke-width="1.3"/><path d="M2.60 5.60L6.80 3.80L6.80 7.40Z" fill="#333"/></svg>
<svg class="r" style="left:1191.75px;top:132.5px;" width="24" height="24" viewBox="0 0 24 24"><path d="M7.8 3L2.8 21H17.6" fill="none" stroke="#333" stroke-width="1.3"/><path d="M7.4 6.6C13.4 8 18 12.4 20 18.4" fill="none" stroke="#333" stroke-width="1.2"/><path d="M7.00 6.50L10.82 5.55L10.27 8.70Z" fill="#333"/><path d="M20.20 19.00L17.47 16.16L20.47 15.07Z" fill="#333"/></svg>
<svg class="r" style="left:1209.6px;top:149.9px;" width="8" height="7" viewBox="0 0 8 7"><path d="M8 0.4V7H0.4Z" fill="#333"/></svg>
<svg class="r" style="left:1224.5px;top:69.5px;" width="24" height="24" viewBox="0 0 24 24"><path d="M2.6 20.6L12.6 3H22.4M12.6 3L21.6 20.6" fill="none" stroke="#333" stroke-width="1.3"/><path d="M2.20 21.40L2.77 16.42L6.23 18.42Z" fill="#333"/><path d="M22.00 21.40L18.13 18.21L21.69 16.39Z" fill="#333"/></svg>
<svg class="r" style="left:1257.4px;top:69.5px;" width="24" height="24" viewBox="0 0 24 24"><path d="M2.8 20.4L14 3H22.4M13.4 9H22.4M13.4 15H22.4M13.8 3V15" fill="none" stroke="#333" stroke-width="1.2"/><path d="M2.40 21.20L3.23 16.25L6.58 18.43Z" fill="#333"/></svg>
<svg class="r" style="left:1289.25px;top:69.5px;" width="24" height="24" viewBox="0 0 24 24"><path d="M6.4 11.2H17.2L11.8 20L6.4 11.2M11.8 20L22.4 1.8M2 21H22.4" fill="none" stroke="#333" stroke-width="1.2"/></svg>
<svg class="r" style="left:1321.75px;top:69.5px;" width="24" height="24" viewBox="0 0 24 24"><rect x="6" y="3" width="13" height="11.2" fill="none" stroke="#333" stroke-width="1.3"/><path d="M9.2 12.4L12.5 4.8L15.8 12.4M10.4 9.8H14.6" fill="none" stroke="#333" stroke-width="1"/><path d="M12.5 14.2V18M2.6 21H21.6" fill="none" stroke="#333" stroke-width="1.3"/><path d="M12.5 16.6L16.4 21H8.6Z" fill="#333"/></svg>
<svg class="r" style="left:1224.5px;top:100.5px;" width="24" height="24" viewBox="0 0 24 24"><path d="M2.8 14L7.6 2.8L12.4 14M4.4 10.2H10.8" fill="none" stroke="#333" stroke-width="1.4"/><path d="M2.4 19.4H21" fill="none" stroke="#333" stroke-width="1.2"/><path d="M22.40 19.40L17.80 21.20L17.80 17.60Z" fill="#333"/></svg>
<svg class="r" style="left:1257.4px;top:100.5px;" width="24" height="24" viewBox="0 0 24 24"><path d="M3 14L7.8 2.8L12.6 14M4.6 10.2H11" fill="none" stroke="#333" stroke-width="1.4"/><path d="M18.6 3V17" fill="none" stroke="#333" stroke-width="1.3"/><path d="M18.60 18.60L16.70 14.20L20.50 14.20Z" fill="#333"/><rect x="2" y="19.4" width="16" height="2.6" fill="#333"/></svg>
<svg class="r" style="left:1275.8px;top:117.8px;" width="8" height="7" viewBox="0 0 8 7"><path d="M8 0.4V7H0.4Z" fill="#333"/></svg>
<svg class="r" style="left:1289.25px;top:100.5px;" width="24" height="24" viewBox="0 0 24 24"><circle cx="10.2" cy="13.6" r="7.8" fill="none" stroke="#333" stroke-width="1.3"/><path d="M2.4 13.6H18M8 11.2H12.6V21M8 11.2V21M15 7.4L18.4 3.4H23" fill="none" stroke="#333" stroke-width="1.2"/></svg>
<svg class="r" style="left:1321.75px;top:100.5px;" width="24" height="24" viewBox="0 0 24 24"><path d="M7.4 3H21.4V11H7.4M7.4 3V21M12 3V11M16.6 3V11M2.6 21H21.6" fill="none" stroke="#333" stroke-width="1.3"/><path d="M7.4 16L12 21H2.8Z" fill="#333"/></svg>
<svg class="r" style="left:1224.5px;top:132.5px;" width="24" height="24" viewBox="0 0 24 24"><path d="M2.2 3H22V8.6H20.8C20.4 5.8 19 5 16.6 5H14.4V18.6C14.4 19.8 15 20.2 17.2 20.4V21.6H7V20.4C9.2 20.2 9.8 19.8 9.8 18.6V5H7.6C5.2 5 3.8 5.8 3.4 8.6H2.2Z" fill="#333"/></svg>
<svg class="r" style="left:1257.4px;top:132.5px;" width="24" height="24" viewBox="0 0 24 24"><rect x="2.6" y="3.2" width="19" height="18" fill="none" stroke="#333" stroke-width="1.4"/><path d="M2.6 7.2H21.6" fill="none" stroke="#333" stroke-width="1.2"/><path d="M4.8 5.2H19.4" fill="none" stroke="#333" stroke-width="1" stroke-dasharray="3 1"/><path d="M4.6 10H19.6M4.6 13H19.6M4.6 16H19.6M4.6 19H19.6" fill="none" stroke="#333" stroke-width="1.2" stroke-dasharray="3.2 1.2"/></svg>
<svg class="r" style="left:1289.25px;top:132.5px;" width="24" height="24" viewBox="0 0 24 24"><path d="M12.4 1.6H18.4L14.6 8.6H17.6L10 19.6L12 11.2H9Z" fill="#333"/><path d="M10 19.6L8.6 21.4" fill="none" stroke="#333" stroke-width="1.2"/><path d="M2 21.4H22.4" fill="none" stroke="#333" stroke-width="1.2" stroke-dasharray="6 1.2 1.6 1.2"/></svg>
<svg class="r" style="left:1321.75px;top:132.5px;" width="24" height="24" viewBox="0 0 24 24"><path d="M12.6 3L21.6 14.6H5.6L12.6 3M12.6 3L3.6 20" fill="none" stroke="#333" stroke-width="1.3"/><path d="M11 12.8L12.8 8.2L14.6 12.8M11.6 11.4H14" fill="none" stroke="#333" stroke-width="0.9"/><path d="M3.00 21.20L3.39 16.20L6.93 18.08Z" fill="#333"/></svg>
<svg class="r" style="left:1341px;top:149.9px;" width="8" height="7" viewBox="0 0 8 7"><path d="M8 0.4V7H0.4Z" fill="#333"/></svg>
<svg class="r" style="left:1356.5px;top:69.5px;" width="24" height="24" viewBox="0 0 24 24"><path d="M5 2.6V21M2 19H22" fill="none" stroke="#333" stroke-width="1.3"/><path d="M7 6H15.4M17.6 8.6V16" fill="none" stroke="#333" stroke-width="1.2"/><path d="M6.00 6.00L9.80 4.30L9.80 7.70Z" fill="#333"/><path d="M17.60 17.60L15.90 13.80L19.30 13.80Z" fill="#333"/><circle cx="17.6" cy="6" r="1.9" fill="#f0f0f0" stroke="#333" stroke-width="1.2"/></svg>
<svg class="r" style="left:1388.6px;top:69.5px;" width="24" height="24" viewBox="0 0 24 24"><path d="M2 16L17 2M7 21L22 7" fill="none" stroke="#333" stroke-width="1.3"/></svg>
<svg class="r" style="left:1421.5px;top:69.5px;" width="24" height="24" viewBox="0 0 24 24"><path d="M2 21.4H22.4M13 2V21.4M13 16H17.6V21.4" fill="none" stroke="#333" stroke-width="1.3"/></svg>
<svg class="r" style="left:1453.4px;top:69.5px;" width="24" height="24" viewBox="0 0 24 24"><circle cx="10" cy="10" r="7.8" fill="none" stroke="#333" stroke-width="1.3"/><path d="M7 21L22.4 8" fill="none" stroke="#333" stroke-width="1.3"/></svg>
<svg class="r" style="left:1356.5px;top:100.5px;" width="24" height="24" viewBox="0 0 24 24"><path d="M2 21.4L10.4 13.4M13.4 10.6L22 2.4" fill="none" stroke="#333" stroke-width="1.3"/></svg>
<svg class="r" style="left:1388.6px;top:100.5px;" width="24" height="24" viewBox="0 0 24 24"><path d="M16.4 5.4L2.6 20.6L20.4 13.4M2.6 21H22" fill="none" stroke="#333" stroke-width="1.3"/></svg>
<svg class="r" style="left:1421.5px;top:100.5px;" width="24" height="24" viewBox="0 0 24 24"><path d="M12 9L20.6 17.6H3.4Z" fill="#333"/><path d="M3.0 21.6L6.0 18 M6.2 21.6L9.2 18 M9.4 21.6L12.4 18 M12.600000000000001 21.6L15.600000000000001 18 M15.8 21.6L18.8 18 M19.0 21.6L22.0 18 " fill="none" stroke="#333" stroke-width="1.1"/><circle cx="12" cy="6.4" r="1.9" fill="#f0f0f0" stroke="#333" stroke-width="1.2"/></svg>
<svg class="r" style="left:1440px;top:117.8px;" width="8" height="7" viewBox="0 0 8 7"><path d="M8 0.4V7H0.4Z" fill="#333"/></svg>
<svg class="r" style="left:1453.4px;top:100.5px;" width="24" height="24" viewBox="0 0 24 24"><circle cx="12" cy="12" r="8.4" fill="none" stroke="#333" stroke-width="1.3"/><circle cx="12" cy="12" r="4.2" fill="none" stroke="#333" stroke-width="1.3"/></svg>
<svg class="r" style="left:1356.5px;top:132.5px;" width="24" height="24" viewBox="0 0 24 24"><path d="M2.6 2.6L6.4 18M21 2.6L17.2 18" fill="none" stroke="#333" stroke-width="1.3"/><circle cx="6.8" cy="20" r="1.9" fill="#f0f0f0" stroke="#333" stroke-width="1.2"/><circle cx="16.8" cy="20" r="1.9" fill="#f0f0f0" stroke="#333" stroke-width="1.2"/></svg>
<svg class="r" style="left:1374.6px;top:149.9px;" width="8" height="7" viewBox="0 0 8 7"><path d="M8 0.4V7H0.4Z" fill="#333"/></svg>
<svg class="r" style="left:1388.6px;top:132.5px;" width="24" height="24" viewBox="0 0 24 24"><rect x="4.4" y="9.4" width="15.2" height="2.8" fill="#333"/><rect x="4.4" y="14.4" width="15.2" height="2.8" fill="#333"/></svg>
<svg class="r" style="left:1421.5px;top:132.5px;" width="24" height="24" viewBox="0 0 24 24"><path d="M2.6 3.2V21.2H21.2Z" fill="none" stroke="#333" stroke-width="1.3"/><path d="M2.6 21.2L12 12.2" fill="none" stroke="#333" stroke-width="1.2"/></svg>
<svg class="r" style="left:1453.4px;top:132.5px;" width="24" height="24" viewBox="0 0 24 24"><defs><clipPath id="qc"><circle cx="12" cy="12" r="9"/></clipPath></defs><g clip-path="url(#qc)"><path d="M-6.0 22L8.0 2 M-2.4 22L11.6 2 M1.2000000000000002 22L15.2 2 M4.800000000000001 22L18.8 2 M8.4 22L22.4 2 M12.0 22L26.0 2 M15.600000000000001 22L29.6 2 M19.2 22L33.2 2 " fill="none" stroke="#333" stroke-width="1"/><rect x="7.6" y="5" width="8.8" height="14" fill="#f0f0f0"/></g><circle cx="12" cy="12" r="9.2" fill="none" stroke="#333" stroke-width="1.3"/><path d="M9.6 8.4C9.6 5.6000000000000005 14.2 5.6000000000000005 14.2 8.2C14.2 10.4 11.899999999999999 10.2 11.899999999999999 12.4" fill="none" stroke="#333" stroke-width="1.2"/><rect x="11.1" y="13.8" width="1.6" height="1.6" fill="#333"/></svg>
<svg class="r" style="left:1472px;top:149.9px;" width="8" height="7" viewBox="0 0 8 7"><path d="M8 0.4V7H0.4Z" fill="#333"/></svg>
<svg class="r" style="left:1487.4px;top:69.5px;" width="24" height="24" viewBox="0 0 24 24"><path d="M6 18L9 15.2M15.6 8.4L17.4 6.6" fill="none" stroke="#333" stroke-width="1.1" stroke-dasharray="1.4 1.4"/><circle cx="4.4" cy="19.6" r="1.9" fill="#f0f0f0" stroke="#333" stroke-width="1.2"/><circle cx="19.2" cy="5" r="1.9" fill="#f0f0f0" stroke="#333" stroke-width="1.2"/><path d="M9.6 8.600000000000001C9.6 5.800000000000001 14.2 5.800000000000001 14.2 8.4C14.2 10.600000000000001 11.899999999999999 10.4 11.899999999999999 12.600000000000001" fill="none" stroke="#333" stroke-width="1.2"/><rect x="11.1" y="14.0" width="1.6" height="1.6" fill="#333"/></svg>
<svg class="r" style="left:1519.25px;top:69.5px;" width="24" height="24" viewBox="0 0 24 24"><path d="M4 8.4V17.4M6.4 19.6H17.4M5.4 11C11 10.6 15.6 14 16.4 18" fill="none" stroke="#333" stroke-width="1.1" stroke-dasharray="1.3 1.3"/><circle cx="4" cy="5" r="1.9" fill="#f0f0f0" stroke="#333" stroke-width="1.2"/><circle cx="4" cy="19.6" r="1.9" fill="#f0f0f0" stroke="#333" stroke-width="1.2"/><circle cx="19.6" cy="17.4" r="1.7" fill="#f0f0f0" stroke="#333" stroke-width="1.2"/><path d="M16.4 4.6C16.4 1.7999999999999998 21.0 1.7999999999999998 21.0 4.4C21.0 6.6 18.7 6.4 18.7 8.6" fill="none" stroke="#333" stroke-width="1.2"/><rect x="17.9" y="10.0" width="1.6" height="1.6" fill="#333"/></svg>
<svg class="r" style="left:1487.4px;top:100.5px;" width="24" height="24" viewBox="0 0 24 24"><path d="M2 7.4L8 20.6M4 5.4L2.4 9.4M21.6 7.4L15.6 20.6M20 5.4L22 9.4M3.4 21.6L9.4 17.4M20.4 21.6L14.4 17.4M8.6 19H15" fill="none" stroke="#333" stroke-width="1.1"/><circle cx="7.4" cy="19" r="1.9" fill="#f0f0f0" stroke="#333" stroke-width="1.2"/><circle cx="16.4" cy="19" r="1.9" fill="#f0f0f0" stroke="#333" stroke-width="1.2"/><path d="M9.8 5.2C9.8 2.4 14.4 2.4 14.4 5C14.4 7.2 12.100000000000001 7 12.100000000000001 9.2" fill="none" stroke="#333" stroke-width="1.2"/><rect x="11.3" y="10.6" width="1.6" height="1.6" fill="#333"/></svg>
<svg class="r" style="left:1519.25px;top:100.5px;" width="24" height="24" viewBox="0 0 24 24"><path d="M2.8 3H11.6V11C11.6 14 13.4 15.4 15.6 15.4H21.2V21.2H2.8Z" fill="none" stroke="#333" stroke-width="1.4"/><path d="M16.2 5.2C16.2 2.4 20.799999999999997 2.4 20.799999999999997 5C20.799999999999997 7.2 18.5 7 18.5 9.2" fill="none" stroke="#333" stroke-width="1.2"/><rect x="17.7" y="10.6" width="1.6" height="1.6" fill="#333"/></svg>
<svg class="r" style="left:1487.4px;top:132.5px;" width="24" height="24" viewBox="0 0 24 24"><defs><clipPath id="lc"><path d="M2.8 3H11.2V12C11.2 15 13 16 15 16H21.2V21.2H2.8Z"/></clipPath></defs><g clip-path="url(#lc)"><path d="M-8.0 22L4.0 3 M-5.3 22L6.7 3 M-2.5999999999999996 22L9.4 3 M0.10000000000000142 22L12.100000000000001 3 M2.8000000000000007 22L14.8 3 M5.5 22L17.5 3 M8.200000000000003 22L20.200000000000003 3 M10.900000000000002 22L22.900000000000002 3 M13.600000000000001 22L25.6 3 M16.3 22L28.3 3 M19.0 22L31.0 3 M21.700000000000003 22L33.7 3 " fill="none" stroke="#333" stroke-width="0.9"/></g><path d="M2.8 3H11.2V12C11.2 15 13 16 15 16H21.2V21.2H2.8Z" fill="none" stroke="#333" stroke-width="1.4"/><path d="M15.8 5.2C15.8 2.4 20.4 2.4 20.4 5C20.4 7.2 18.1 7 18.1 9.2" fill="none" stroke="#333" stroke-width="1.2"/><rect x="17.3" y="10.6" width="1.6" height="1.6" fill="#333"/></svg>
<svg class="r" style="left:1519.25px;top:132.5px;" width="24" height="24" viewBox="0 0 24 24"><path d="M5 4V20H20" fill="none" stroke="#333" stroke-width="1.2"/><path d="M5.00 2.40L6.80 6.40L3.20 6.40Z" fill="#333"/><path d="M22.00 20.00L18.00 21.80L18.00 18.20Z" fill="#333"/><circle cx="10.4" cy="14.4" r="1.7" fill="#f0f0f0" stroke="#333" stroke-width="1.2"/><path d="M16.2 5.6C16.2 2.8 20.799999999999997 2.8 20.799999999999997 5.4C20.799999999999997 7.6 18.5 7.4 18.5 9.6" fill="none" stroke="#333" stroke-width="1.2"/><rect x="17.7" y="11.0" width="1.6" height="1.6" fill="#333"/></svg>
<svg class="r" style="left:1552.75px;top:69.5px;" width="24" height="24" viewBox="0 0 24 24"><rect x="3" y="3.6" width="17.6" height="16.8" fill="none" stroke="#333" stroke-width="1.4"/><path d="M8.8 9.4V15.4L16.4 16.6" fill="none" stroke="#333" stroke-width="1.2"/><path d="M8.80 7.40L10.60 11.00L7.00 11.00Z" fill="#333"/><path d="M18.40 17.00L14.54 18.15L15.17 14.60Z" fill="#333"/><path d="M6.8 13.4L8.8 15.4" fill="none" stroke="#333" stroke-width="1"/></svg>
<svg class="r" style="left:1586.5px;top:69.5px;" width="24" height="24" viewBox="0 0 24 24"><rect x="3.6" y="3" width="7.4" height="2.8" fill="none" stroke="#333" stroke-width="1.1"/><path d="M12.6 3.4C16.6 2.6 19.4 4 20 6.8" fill="none" stroke="#333" stroke-width="1.1"/><path d="M20.20 7.80L18.07 4.93L21.22 4.37Z" fill="#333"/><path d="M2.6 8.6H21.4M2.6 8.6V20.8H21.4V10.6" fill="none" stroke="#333" stroke-width="1.3"/><rect x="5.6" y="11" width="6" height="3" fill="none" stroke="#333" stroke-width="1.1"/><rect x="13.6" y="11" width="5" height="3" fill="none" stroke="#333" stroke-width="1.1"/><rect x="5.6" y="16" width="6" height="2.8" fill="none" stroke="#333" stroke-width="1.1"/><path d="M13.6 18H21" fill="none" stroke="#333" stroke-width="1.1"/></svg>
<svg class="r" style="left:1552.75px;top:100.5px;" width="24" height="24" viewBox="0 0 24 24"><rect x="4.2" y="3" width="7.6" height="2.8" fill="none" stroke="#333" stroke-width="1.1"/><path d="M13.4 3.4C17.4 2.6 20 4 20.8 6.8" fill="none" stroke="#333" stroke-width="1.1"/><path d="M21.00 7.80L18.87 4.93L22.02 4.37Z" fill="#333"/><path d="M3 8.8H21.6V20.8H3Z" fill="none" stroke="#333" stroke-width="1.3"/><rect x="5.6" y="11.6" width="7.6" height="3.4" fill="none" stroke="#333" stroke-width="1.1"/><path d="M14.6 18.2H21.4" fill="none" stroke="#333" stroke-width="1.1"/><path d="M14.6 20.8V17.8" fill="none" stroke="#333" stroke-width="1.1"/></svg>
<svg class="r" style="left:1586.5px;top:100.5px;" width="24" height="24" viewBox="0 0 24 24"><rect x="2.6" y="3.2" width="18.8" height="7.6" fill="none" stroke="#333" stroke-width="1.3"/><rect x="7.4" y="5.4" width="9.2" height="3.4" fill="none" stroke="#333" stroke-width="1.1"/><path d="M2.6 13H21.4" fill="none" stroke="#333" stroke-width="1" stroke-dasharray="2 1.4"/><path d="M2.6 15.2H21.4V21H2.6Z" fill="none" stroke="#333" stroke-width="1.3"/><path d="M5.4 18.2H18.6" fill="none" stroke="#333" stroke-width="1" stroke-dasharray="2.4 1.2"/></svg>
<svg class="r" style="left:1552.75px;top:132.5px;" width="24" height="24" viewBox="0 0 24 24"><rect x="3" y="10.4" width="17.6" height="4" fill="none" stroke="#333" stroke-width="1.3"/><rect x="3" y="16.8" width="17.6" height="4" fill="none" stroke="#333" stroke-width="1.3"/><path d="M12 2.4V7" fill="none" stroke="#333" stroke-width="1.2"/><path d="M12.00 9.00L10.20 5.40L13.80 5.40Z" fill="#333"/></svg>
<svg class="r" style="left:1586.5px;top:132.5px;" width="24" height="24" viewBox="0 0 24 24"><path d="M2.4 5.6H7.6M2.4 19.6H7.6M10.6 2.4V9M10.6 16.4V23" fill="none" stroke="#333" stroke-width="1.2"/><path d="M9.60 5.60L6.00 7.30L6.00 3.90Z" fill="#333"/><path d="M9.60 19.60L6.00 21.30L6.00 17.90Z" fill="#333"/><rect x="14.6" y="7" width="6" height="11" fill="none" stroke="#333" stroke-width="1.3"/></svg>
<svg class="r" style="left:1619.6px;top:69.5px;" width="24" height="24" viewBox="0 0 24 24"><path d="M2.4 13.6L8.4 3.4L14 13.6Z" fill="none" stroke="#333" stroke-width="1.1"/><rect x="12.6" y="2.8" width="9" height="7.6" fill="#f0f0f0" stroke="#333" stroke-width="1.2"/><circle cx="12" cy="15.6" r="5.6" fill="none" stroke="#333" stroke-width="1.3"/></svg>
<svg class="r" style="left:1652.4px;top:69.5px;" width="24" height="24" viewBox="0 0 24 24"><path d="M3.4 19.6V3.2H15L21.4 10V19.6Z" fill="none" stroke="#333" stroke-width="1.3"/><circle cx="12.4" cy="11.6" r="4.2" fill="none" stroke="#333" stroke-width="1.3"/><circle cx="3.4" cy="19.8" r="2" fill="#f0f0f0" stroke="#333" stroke-width="1.3"/></svg>
<svg class="r" style="left:1619.6px;top:100.5px;" width="24" height="24" viewBox="0 0 24 24"><rect x="2.8" y="3.4" width="18.6" height="17.8" fill="none" stroke="#333" stroke-width="1.5"/><path d="M3.2 20.8L10 11.8L13.2 15.8L15.6 13.4L21 20.8Z" fill="#333"/><circle cx="16.6" cy="7.6" r="2.3" fill="#333"/></svg>
<svg class="r" style="left:1652.4px;top:100.5px;" width="24" height="24" viewBox="0 0 24 24"><path d="M9.4 5.4H3V21H18.8V14.4" fill="none" stroke="#333" stroke-width="1.3"/><path d="M10.4 3.4H21.2V14.4H10.4Z" fill="none" stroke="#333" stroke-width="1.1" stroke-dasharray="1.4 1.2"/><path d="M10.4 3.6L21 14.2" fill="none" stroke="#333" stroke-width="1.1"/></svg>
<svg class="r" style="left:1619.6px;top:132.5px;" width="24" height="24" viewBox="0 0 24 24"><path d="M16 3.6H3V21.4H20.4V9" fill="none" stroke="#333" stroke-width="1.4"/><path d="M17 2.6V6.6H21" fill="none" stroke="#333" stroke-width="1.2"/><path d="M17.00 1.00L18.50 4.00L15.50 4.00Z" fill="#333"/><path d="M22.60 6.60L19.60 8.10L19.60 5.10Z" fill="#333"/><path d="M6.4 13V17.4C10 18 15.4 17.6 17.4 13.6" fill="none" stroke="#333" stroke-width="1.1"/><path d="M6.40 11.60L7.80 14.60L5.00 14.60Z" fill="#333"/><path d="M17.80 12.40L18.09 15.70L15.46 14.74Z" fill="#333"/><path d="M10.00 17.60L13.30 17.31L12.34 19.94Z" fill="#333"/></svg>
<svg class="r" style="left:1652.4px;top:132.5px;" width="24" height="24" viewBox="0 0 24 24"><rect x="8.4" y="3.2" width="13.6" height="7.4" fill="none" stroke="#333" stroke-width="1.3"/><path d="M8.4 10.6L3 21.2L8.4 16.4L12 21.2Z" fill="none" stroke="#333" stroke-width="1.2"/></svg>
<svg class="r" style="left:1693.5px;top:75px;" width="11" height="13" viewBox="0 0 11 13"><rect x="0.7" y="0.7" width="9.6" height="11.6" fill="#f6f6f6" stroke="#c9cbd6" stroke-width="1.2"/></svg>
<svg class="r" style="left:1693.5px;top:106px;" width="11" height="13" viewBox="0 0 11 13"><rect x="0.7" y="0.7" width="9.6" height="11.6" fill="#efefef" stroke="#dcdfe4" stroke-width="1.1"/></svg>
<svg class="r" style="left:1719.5px;top:69.5px;" width="24" height="24" viewBox="0 0 24 24"><path d="M2.4 20.8V11.2H9.6V3H21.4V20.8Z" fill="none" stroke="#333" stroke-width="1.3"/><path d="M5.6 18V14.2H12.6V6H18.4V18Z" fill="none" stroke="#333" stroke-width="1.2"/></svg>
<svg class="r" style="left:1752.4px;top:69.5px;" width="24" height="24" viewBox="0 0 24 24"><path d="M2.4 13H11" fill="none" stroke="#333" stroke-width="1.3"/><path d="M11 13H19.4" fill="none" stroke="#333" stroke-width="1.1" stroke-dasharray="1.6 1.2"/><path d="M20.6 2.4V12" fill="none" stroke="#333" stroke-width="1.1" stroke-dasharray="1.3 1.2"/><path d="M20.6 12V21.6" fill="none" stroke="#333" stroke-width="1.4"/></svg>
<svg class="r" style="left:1719.5px;top:100.5px;" width="24" height="24" viewBox="0 0 24 24"><circle cx="14.6" cy="9.4" r="7.2" fill="#333"/><rect x="2.6" y="10.6" width="12.6" height="10.8" fill="#333" stroke="#f0f0f0" stroke-width="0.8"/></svg>
<svg class="r" style="left:1752.4px;top:100.5px;" width="24" height="24" viewBox="0 0 24 24"><path d="M2.8 21.2V12.4H6.6C4.4 7.4 8.8 2.4 14.4 3.6C20.4 4.8 22.4 12.6 16 16.4V21.2Z" fill="none" stroke="#333" stroke-width="1.4"/></svg>
<svg class="r" style="left:1719.5px;top:132.5px;" width="24" height="24" viewBox="0 0 24 24"><path d="M5.6 12.4L13.4 4.6C16.4 1.4 22.6 5.4 20 9.6L17.6 12.4" fill="#333"/><path d="M14.6 9L17.6 6.4M17 10.8L20 8.2" stroke="#f0f0f0" stroke-width="0.9"/><path d="M2.4 14.4H21.6M2.4 21.4H21.6" fill="none" stroke="#333" stroke-width="1.2" stroke-dasharray="3 1.4"/><path d="M2.6 14.4V21.4M21.4 14.4V21.4" fill="none" stroke="#333" stroke-width="1.2"/><path d="M5 18H19" fill="none" stroke="#333" stroke-width="1.1"/><path d="M3.60 18.00L6.80 16.50L6.80 19.50Z" fill="#333"/><path d="M20.40 18.00L17.20 19.50L17.20 16.50Z" fill="#333"/><path d="M12 16V20" fill="none" stroke="#333" stroke-width="1"/></svg>
<svg class="r" style="left:1786.2px;top:69.5px;" width="24" height="24" viewBox="0 0 24 24"><defs><clipPath id="ec"><path d="M2.4 3H8.4V16.4L12.4 20.6H2.4ZM21.6 3H15.8V16.4L12.4 20.6H21.6Z"/></clipPath></defs><g clip-path="url(#ec)"><path d="M-8.0 22L2.0 2 M-5.6 22L4.4 2 M-3.2 22L6.8 2 M-0.8000000000000007 22L9.2 2 M1.5999999999999996 22L11.6 2 M4.0 22L14.0 2 M6.399999999999999 22L16.4 2 M8.8 22L18.8 2 M11.2 22L21.2 2 M13.599999999999998 22L23.599999999999998 2 M16.0 22L26.0 2 M18.4 22L28.4 2 M20.799999999999997 22L30.799999999999997 2 M23.2 22L33.2 2 " fill="none" stroke="#333" stroke-width="0.9"/></g><path d="M2 3H22M8.4 3V16.6L12.2 20.8L15.8 16.6V3M8.4 16.6H15.8" fill="none" stroke="#333" stroke-width="1.3"/></svg>
<svg class="r" style="left:1805px;top:86.8px;" width="8" height="7" viewBox="0 0 8 7"><path d="M8 0.4V7H0.4Z" fill="#333"/></svg>
<svg class="r" style="left:1786.2px;top:100.8px;" width="24" height="24" viewBox="0 0 24 24"><circle cx="12" cy="12" r="8.8" fill="none" stroke="#333" stroke-width="1.3"/><path d="M16.6 12.6C16.4 15 14.4 16.8 12 16.8C9.4 16.8 7.2 14.6 7.2 12C7.2 9.4 9.4 7.2 12 7.2C13.6 7.2 15 8 16 9.4" fill="none" stroke="#333" stroke-width="1.2"/><path d="M12 10V14.6M9.8 12.2H14.4" fill="none" stroke="#333" stroke-width="1.2"/></svg>
<svg class="r" style="left:1786.2px;top:132.5px;" width="24" height="24" viewBox="0 0 24 24"><path d="M4.4 11H16.4M6.2 11V16.4L10.4 21L14.4 16.4V11M6.2 16.4H14.4" fill="none" stroke="#333" stroke-width="1.3"/><path d="M10.4 10.6V6.4C10.4 3.6 14 2.6 17 4.6" fill="none" stroke="#333" stroke-width="1.2"/><path d="M18.40 6.00L14.77 5.04L16.82 2.59Z" fill="#333"/><path d="M14 8.4C16 7 19.4 7.6 20 9.6" fill="none" stroke="#333" stroke-width="1.1"/></svg>
<div class="r" style="left:2px;top:181px;width:375px;height:847px;background:#f1f1f1;"></div>
<div class="r" style="left:376px;top:181px;width:1px;height:847px;background:#fafafa;"></div>
<div class="r" style="left:377px;top:181px;width:1px;height:847px;background:#6c6c6c;"></div>
<div class="r" style="left:2px;top:181px;width:177px;height:23px;background:#9f9f9f;"></div>
<div class="r" style="left:2px;top:181px;width:176px;height:22px;background:#c9c9c9;"></div>
<span class="t" style="left:6.5px;top:185.07px;font-size:13.5px;letter-spacing:0.005px;color:#565656;">Параметры</span>
<span class="t" style="left:183px;top:185.07px;font-size:13.5px;letter-spacing:0.106px;color:#333;">Дерево чертежа</span>
<div class="r" style="left:355px;top:181px;width:22px;height:23px;background:#9f9f9f;"></div>
<div class="r" style="left:356px;top:181px;width:21px;height:22px;background:#c9c9c9;"></div>
<svg class="r" style="left:357px;top:182px;" width="20" height="20" viewBox="0 0 20 20"><g transform="translate(10,10.2)"><path d="M-2.6 -4.6L0 -8L2.6 -4.6Z" transform="rotate(0)" fill="#333"/><path d="M-2.6 -4.6L0 -8L2.6 -4.6Z" transform="rotate(45)" fill="#333"/><path d="M-2.6 -4.6L0 -8L2.6 -4.6Z" transform="rotate(90)" fill="#333"/><path d="M-2.6 -4.6L0 -8L2.6 -4.6Z" transform="rotate(135)" fill="#333"/><path d="M-2.6 -4.6L0 -8L2.6 -4.6Z" transform="rotate(180)" fill="#333"/><path d="M-2.6 -4.6L0 -8L2.6 -4.6Z" transform="rotate(225)" fill="#333"/><path d="M-2.6 -4.6L0 -8L2.6 -4.6Z" transform="rotate(270)" fill="#333"/><path d="M-2.6 -4.6L0 -8L2.6 -4.6Z" transform="rotate(315)" fill="#333"/><circle r="4.7" fill="none" stroke="#333" stroke-width="2.5"/></g></svg>
<svg class="r" style="left:6.4px;top:207.6px;" width="24" height="24" viewBox="0 0 24 24"><rect x="4" y="6" width="16.2" height="11.6" fill="none" stroke="#333" stroke-width="1.5"/><rect x="14" y="13.4" width="6.2" height="4.2" fill="none" stroke="#333" stroke-width="1.2"/></svg>
<svg class="r" style="left:37.8px;top:207.9px;" width="24" height="24" viewBox="0 0 24 24"><rect x="3" y="3.6" width="17.6" height="16.8" fill="none" stroke="#333" stroke-width="1.4"/><path d="M8.8 9.4V15.4L16.4 16.6" fill="none" stroke="#333" stroke-width="1.2"/><path d="M8.80 7.40L10.60 11.00L7.00 11.00Z" fill="#333"/><path d="M18.40 17.00L14.54 18.15L15.17 14.60Z" fill="#333"/><path d="M6.8 13.4L8.8 15.4" fill="none" stroke="#333" stroke-width="1"/></svg>
<svg class="r" style="left:71px;top:208px;" width="24" height="24" viewBox="0 0 24 24"><path d="M2.6 14.8L9.4 9.2H21.6L14.8 14.8Z" fill="#333"/></svg>
<svg class="r" style="left:103.5px;top:207.5px;" width="24" height="24" viewBox="0 0 24 24"><path d="M2.4 13.6L8.4 3.4L14 13.6Z" fill="none" stroke="#333" stroke-width="1.1"/><rect x="12.6" y="2.8" width="9" height="7.6" fill="#f1f1f1" stroke="#333" stroke-width="1.2"/><circle cx="12" cy="15.6" r="5.6" fill="none" stroke="#333" stroke-width="1.3"/></svg>
<svg class="r" style="left:136.5px;top:207.6px;" width="24" height="24" viewBox="0 0 24 24"><rect x="2.8" y="3.4" width="18.6" height="17.8" fill="none" stroke="#333" stroke-width="1.5"/><path d="M3.2 20.8L10 11.8L13.2 15.8L15.6 13.4L21 20.8Z" fill="#333"/><circle cx="16.6" cy="7.6" r="2.3" fill="#333"/></svg>
<svg class="r" style="left:168.3px;top:207.4px;" width="24" height="24" viewBox="0 0 24 24"><path d="M16 3.6H3V21.4H20.4V9" fill="none" stroke="#333" stroke-width="1.4"/><path d="M17 2.6V6.6H21" fill="none" stroke="#333" stroke-width="1.2"/><path d="M17.00 1.00L18.50 4.00L15.50 4.00Z" fill="#333"/><path d="M22.60 6.60L19.60 8.10L19.60 5.10Z" fill="#333"/><path d="M6.4 13V17.4C10 18 15.4 17.6 17.4 13.6" fill="none" stroke="#333" stroke-width="1.1"/><path d="M6.40 11.60L7.80 14.60L5.00 14.60Z" fill="#333"/><path d="M17.80 12.40L18.09 15.70L15.46 14.74Z" fill="#333"/><path d="M10.00 17.60L13.30 17.31L12.34 19.94Z" fill="#333"/></svg>
<div class="r" style="left:2px;top:236px;width:186px;height:28px;background:#ffffff;"></div>
<div class="r" style="left:187px;top:236px;width:1px;height:28px;background:#c4c4c4;"></div>
<div class="r" style="left:2px;top:235px;width:375px;height:1px;background:#e2e2e2;"></div>
<div class="r" style="left:192px;top:236px;width:185px;height:28px;background:#ffffff;"></div>
<div class="r" style="left:192px;top:236px;width:1px;height:28px;background:#c4c4c4;"></div>
<div class="r" style="left:2px;top:264px;width:375px;height:1.7px;background:#3c3c3c;"></div>
<div class="r" style="left:5px;top:239px;width:28px;height:19.5px;background:#000;"></div>
<span class="t" style="left:14.6px;top:241.05px;font-size:15px;color:#fff;">2</span>
<span class="t" style="left:34.75px;top:240.78px;font-size:15.5px;letter-spacing:0.030px;color:#3a3a3a;">Проекционны</span>
<svg class="r" style="left:134.6px;top:252.6px;" width="11" height="2" viewBox="0 0 11 2"><rect x="0.0" y="0" width="1.9" height="1.9" fill="#3a3a3a"/><rect x="3.8" y="0" width="1.9" height="1.9" fill="#3a3a3a"/><rect x="7.6" y="0" width="1.9" height="1.9" fill="#3a3a3a"/></svg>
<svg class="r" style="left:168px;top:246.2px;" width="12" height="7" viewBox="0 0 12 7"><path d="M0 0.2H11.4L5.7 6Z" fill="#333"/></svg>
<div class="r" style="left:195.2px;top:239px;width:28px;height:19.5px;background:#8c8c8c;"></div>
<span class="t" style="left:204.8px;top:241.05px;font-size:15px;color:#fff;">0</span>
<span class="t" style="left:224.4px;top:240.78px;font-size:15.5px;letter-spacing:-0.439px;color:#3a3a3a;">Системный слой</span>
<svg class="r" style="left:358px;top:246.2px;" width="12" height="7" viewBox="0 0 12 7"><path d="M0 0.2H11.4L5.7 6Z" fill="#333"/></svg>
<div class="r" style="left:2px;top:266px;width:375px;height:31px;background:#ffffff;"></div>
<div class="r" style="left:2px;top:266px;width:32px;height:31px;background:#f1f1f1;"></div>
<svg class="r" style="left:7px;top:270px;" width="24" height="22" viewBox="0 0 24 22"><path d="M1.2 1.2H21.8L13.4 10.6V20.8L9.8 19.6V10.6Z" fill="#333"/></svg>
<svg class="r" style="left:42px;top:275px;" width="17" height="15" viewBox="0 0 17 15"><circle cx="10.4" cy="6.2" r="4.6" fill="none" stroke="#b4b4b4" stroke-width="1.6"/><path d="M7 9.6L1.6 14" stroke="#b4b4b4" stroke-width="2"/></svg>
<div class="r" style="left:2px;top:297px;width:375px;height:1px;background:#4a4a4a;"></div>
<div class="r" style="left:2px;top:298px;width:375px;height:3px;background:linear-gradient(#bdbdbd,#eeeeee);"></div>
<div class="r" style="left:2px;top:300px;width:162px;height:165px;background:#e4e4e4;"></div>
<div class="r" style="left:2px;top:333px;width:162px;height:1px;background:#ececec;"></div>
<div class="r" style="left:164px;top:333px;width:212px;height:1px;background:#e9e9e9;"></div>
<div class="r" style="left:2px;top:399px;width:162px;height:1px;background:#ececec;"></div>
<div class="r" style="left:164px;top:399px;width:212px;height:1px;background:#e9e9e9;"></div>
<div class="r" style="left:2px;top:432px;width:162px;height:1px;background:#ececec;"></div>
<div class="r" style="left:164px;top:432px;width:212px;height:1px;background:#e9e9e9;"></div>
<div class="r" style="left:164px;top:464.5px;width:212px;height:1px;background:#e9e9e9;"></div>
<div class="r" style="left:34px;top:300px;width:0.8px;height:165px;background:#e9e9e9;"></div>
<div class="r" style="left:99px;top:300px;width:0.8px;height:165px;background:#e9e9e9;"></div>
<div class="r" style="left:131px;top:300px;width:0.8px;height:165px;background:#e9e9e9;"></div>
<div class="r" style="left:163.5px;top:300px;width:0.8px;height:165px;background:#e9e9e9;"></div>
<div class="r" style="left:2px;top:365px;width:375px;height:1px;background:#4a4a4a;"></div>
<div class="r" style="left:2px;top:366px;width:375px;height:1px;background:#cfcfcf;"></div>
<div class="r" style="left:98.75px;top:367px;width:32.25px;height:31px;background:#000;"></div>
<div class="r" style="left:98.75px;top:400px;width:32.25px;height:31.5px;background:#000;"></div>
<div class="r" style="left:98.75px;top:433px;width:32.25px;height:31px;background:#000;"></div>
<span class="t" style="left:111.4px;top:377.57px;font-size:11.5px;color:#fff;">0</span>
<span class="t" style="left:111.4px;top:407.17px;font-size:11.5px;color:#fff;">2</span>
<span class="t" style="left:111.4px;top:443.57px;font-size:11.5px;color:#fff;">4</span>
<svg class="r" style="left:111.4px;top:420.6px;" width="7" height="7" viewBox="0 0 7 7"><circle cx="3.3" cy="3.3" r="2.9" fill="#fff"/></svg>
<svg class="r" style="left:9.6px;top:376.0px;" width="19" height="13" viewBox="0 0 19 13"><path d="M0.6 6.2C4.6 -1 14 -1 18 6.2C14 13.4 4.6 13.4 0.6 6.2Z" fill="#333"/><ellipse cx="9.3" cy="6.2" rx="5.2" ry="3.9" fill="#e4e4e4"/><circle cx="9.3" cy="6.2" r="3.2" fill="#333"/><circle cx="9.3" cy="6.2" r="1.1" fill="#e4e4e4"/></svg>
<svg class="r" style="left:42px;top:374.9px;" width="18" height="16" viewBox="0 0 18 16"><path d="M1.6 7.4V4.4C1.6 0.2 7.4 0.2 7.4 4.4V6.6" fill="none" stroke="#333" stroke-width="1.5"/><rect x="5" y="6.4" width="12.4" height="8.4" fill="#333"/><rect x="9.8" y="9.2" width="2.4" height="3.2" fill="#e4e4e4"/></svg>
<svg class="r" style="left:182px;top:378.99999999999994px;" width="7" height="8" viewBox="0 0 7 8"><path d="M0.4 0.2L6.2 3.6L0.4 7Z" fill="#333"/></svg>
<svg class="r" style="left:9.6px;top:409.2px;" width="19" height="13" viewBox="0 0 19 13"><path d="M0.6 6.2C4.6 -1 14 -1 18 6.2C14 13.4 4.6 13.4 0.6 6.2Z" fill="#333"/><ellipse cx="9.3" cy="6.2" rx="5.2" ry="3.9" fill="#e4e4e4"/><circle cx="9.3" cy="6.2" r="3.2" fill="#333"/><circle cx="9.3" cy="6.2" r="1.1" fill="#e4e4e4"/></svg>
<svg class="r" style="left:42px;top:408.09999999999997px;" width="18" height="16" viewBox="0 0 18 16"><path d="M1.6 7.4V4.4C1.6 0.2 7.4 0.2 7.4 4.4V6.6" fill="none" stroke="#333" stroke-width="1.5"/><rect x="5" y="6.4" width="12.4" height="8.4" fill="#333"/><rect x="9.8" y="9.2" width="2.4" height="3.2" fill="#e4e4e4"/></svg>
<svg class="r" style="left:182px;top:412.19999999999993px;" width="7" height="8" viewBox="0 0 7 8"><path d="M0.4 0.2L6.2 3.6L0.4 7Z" fill="#333"/></svg>
<svg class="r" style="left:9.6px;top:442.2px;" width="19" height="13" viewBox="0 0 19 13"><path d="M0.6 6.2C4.6 -1 14 -1 18 6.2C14 13.4 4.6 13.4 0.6 6.2Z" fill="#333"/><ellipse cx="9.3" cy="6.2" rx="5.2" ry="3.9" fill="#e4e4e4"/><circle cx="9.3" cy="6.2" r="3.2" fill="#333"/><circle cx="9.3" cy="6.2" r="1.1" fill="#e4e4e4"/></svg>
<svg class="r" style="left:42px;top:441.09999999999997px;" width="18" height="16" viewBox="0 0 18 16"><path d="M1.6 7.4V4.4C1.6 0.2 7.4 0.2 7.4 4.4V6.6" fill="none" stroke="#333" stroke-width="1.5"/><rect x="5" y="6.4" width="12.4" height="8.4" fill="#333"/><rect x="9.8" y="9.2" width="2.4" height="3.2" fill="#e4e4e4"/></svg>
<svg class="r" style="left:182px;top:445.19999999999993px;" width="7" height="8" viewBox="0 0 7 8"><path d="M0.4 0.2L6.2 3.6L0.4 7Z" fill="#333"/></svg>
<svg class="r" style="left:182px;top:347.2px;" width="7" height="8" viewBox="0 0 7 8"><path d="M0.4 0.2L6.2 3.6L0.4 7Z" fill="#333"/></svg>
<svg class="r" style="left:195px;top:308.6px;" width="21" height="18" viewBox="0 0 21 18"><rect x="0.9" y="0.9" width="19.2" height="15.7" fill="none" stroke="#333" stroke-width="1.6"/><rect x="7.2" y="4.2" width="8.8" height="5.6" fill="none" stroke="#333" stroke-width="1.3"/><path d="M3.6 7H7.2M3.6 7L5.6 5.6M3.6 7L5.6 8.4" stroke="#333" stroke-width="1.1" fill="none"/><path d="M13 4.2V9.8" stroke="#333" stroke-width="1.2"/><path d="M11 16.4V13.4H20" stroke="#333" stroke-width="1.5" fill="none"/></svg>
<span class="t" style="left:218.7px;top:309.08px;font-size:15.5px;letter-spacing:-0.393px;color:#3a3a3a;">Крышка</span>
<svg class="r" style="left:195px;top:341.5px;" width="21" height="19" viewBox="0 0 21 19"><path d="M1 1H8L10.4 3.6H20.4V18.4H1Z" fill="#333"/><rect x="3.2" y="6.4" width="15" height="9.8" fill="#333" stroke="#f1f1f1" stroke-width="1.2"/><rect x="11.4" y="11" width="6.4" height="4.6" fill="#f1f1f1"/><rect x="12.8" y="12.4" width="3.8" height="2" fill="#333"/></svg>
<span class="t" style="left:218.4px;top:341.78px;font-size:15.5px;letter-spacing:-0.705px;color:#3a3a3a;">Листы</span>
<svg class="r" style="left:192px;top:371px;" width="24" height="22" viewBox="0 0 24 22"><rect x="3.4" y="1.6" width="18.6" height="17.4" fill="#f1f1f1" stroke="#333" stroke-width="1.3"/><path d="M3.6 14V19.4L8.6 21" fill="none" stroke="#333" stroke-width="0.9"/><path d="M3.60 12.60L4.90 15.20L2.30 15.20Z" fill="#333"/><path d="M9.60 21.30L6.73 21.73L7.53 19.26Z" fill="#333"/></svg>
<span class="t" style="left:217.5px;top:374.58px;font-size:15.5px;letter-spacing:-0.477px;color:#3a3a3a;">Системный вид (1:1)</span>
<svg class="r" style="left:194.4px;top:404.8px;" width="21" height="19" viewBox="0 0 21 19"><rect x="0.7" y="0.7" width="18.8" height="17.4" fill="#f1f1f1" stroke="#333" stroke-width="1.2"/><path d="M6 6.6V12.2L13.4 13.4" fill="none" stroke="#333" stroke-width="1.1"/><path d="M6.00 4.60L7.60 7.80L4.40 7.80Z" fill="#333"/><path d="M15.40 13.80L11.97 14.82L12.53 11.67Z" fill="#333"/><path d="M4.2 10.4L6 12.2" stroke="#333" stroke-width="0.9"/></svg>
<svg class="r" style="left:194.4px;top:437.8px;" width="21" height="19" viewBox="0 0 21 19"><rect x="0.7" y="0.7" width="18.8" height="17.4" fill="#f1f1f1" stroke="#333" stroke-width="1.2"/><path d="M6 6.6V12.2L13.4 13.4" fill="none" stroke="#333" stroke-width="1.1"/><path d="M6.00 4.60L7.60 7.80L4.40 7.80Z" fill="#333"/><path d="M15.40 13.80L11.97 14.82L12.53 11.67Z" fill="#333"/><path d="M4.2 10.4L6 12.2" stroke="#333" stroke-width="0.9"/></svg>
<svg class="r" style="left:221.6px;top:410.8px;" width="10" height="10" viewBox="0 0 10 10"><circle cx="4.6" cy="4.6" r="4.4" fill="#333"/></svg>
<div class="r" style="left:236px;top:400px;width:140px;height:32px;overflow:hidden"><span class="t" style="left:0px;top:7.08px;font-size:15.5px;letter-spacing:-0.445px;color:#2e2e2e;font-weight:bold;">Проекционный вид</span></div>
<span class="t" style="left:217.5px;top:439.88px;font-size:15.5px;letter-spacing:-0.694px;color:#3a3a3a;font-style:italic;">Разрез А-А (1:1)</span>
<div class="r" style="left:2px;top:838px;width:374px;height:1px;background:#fbfbfb;"></div>
<div class="r" style="left:2px;top:839px;width:375px;height:1px;background:#555555;"></div>
<div class="r" style="left:2px;top:840px;width:375px;height:4px;background:linear-gradient(#c4c4c4,#f1f1f1);"></div>
<div class="r" style="left:728px;top:181px;width:840px;height:33px;background:#6a6a6a;"></div>
<div class="r" style="left:729px;top:181px;width:838px;height:32px;background:#ffffff;"></div>
<div class="r" style="left:729px;top:181px;width:19.5px;height:32px;background:#e8e8e8;"></div>
<svg class="r" style="left:731.9px;top:184.4px;" width="14" height="6" viewBox="0 0 14 6"><rect x="0.0" y="0.0" width="2" height="2" fill="#333"/><rect x="0.0" y="3.5" width="2" height="2" fill="#333"/><rect x="3.7" y="0.0" width="2" height="2" fill="#333"/><rect x="3.7" y="3.5" width="2" height="2" fill="#333"/><rect x="7.4" y="0.0" width="2" height="2" fill="#333"/><rect x="7.4" y="3.5" width="2" height="2" fill="#333"/><rect x="11.100000000000001" y="0.0" width="2" height="2" fill="#333"/><rect x="11.100000000000001" y="3.5" width="2" height="2" fill="#333"/></svg>
<div class="r" style="left:748.2px;top:181px;width:57px;height:32px;background:#4b4b4b;"></div>
<svg class="r" style="left:748.5px;top:181px;" width="57" height="32" viewBox="0 0 57 32"><g transform="translate(-749.2,-179.2)"><path d="M771.8 194.4L761.8 203" fill="none" stroke="#b4b4b4" stroke-width="4.4"/><path d="M771.6 194.4L762.4 202.3" fill="none" stroke="#4b4b4b" stroke-width="1.3"/><path d="M755.4 198.4L766.8 188.9A3.6 3.6 0 0 1 771.8 194.2" fill="none" stroke="#fdfdfd" stroke-width="4.4"/><path d="M766.9 192.3C768.3 191.4 769.5 192.4 768.6 193.6" fill="none" stroke="#7a7a7a" stroke-width="0.9"/></g></svg>
<svg class="r" style="left:786.2px;top:193px;" width="13" height="7" viewBox="0 0 13 7"><path d="M0 0.2H12.4L6.2 6Z" fill="#f6f6f6"/></svg>
<div class="r" style="left:805.4px;top:181px;width:1.6px;height:32px;background:#f4f4f4;"></div>
<div class="r" style="left:807px;top:181px;width:1px;height:32px;background:#777;"></div>
<div class="r" style="left:808px;top:181px;width:103px;height:32px;background:#f0f0f0;"></div>
<div class="r" style="left:911px;top:181px;width:1px;height:32px;background:#8a8a8a;"></div>
<div class="r" style="left:912px;top:181px;width:35px;height:32px;background:#f0f0f0;"></div>
<svg class="r" style="left:813.6px;top:184.3px;" width="24" height="24" viewBox="0 0 24 24"><path d="M2.4 11L11.6 2.4M5.4 13.6L14.4 5" fill="none" stroke="#333" stroke-width="1.4"/><path d="M10.6 21.2H22M16.2 12.4V21.2" fill="none" stroke="#333" stroke-width="1.3"/></svg>
<svg class="r" style="left:847.4px;top:184.3px;" width="24" height="24" viewBox="0 0 24 24"><g transform="translate(8,2.2)"><path d="M0 4C3 -1.2 11 -1.2 14 4C11 9.2 3 9.2 0 4Z" fill="#333"/><ellipse cx="7" cy="4" rx="3.7" ry="2.7" fill="#f0f0f0"/><circle cx="7" cy="4" r="2.3" fill="#333"/><circle cx="7" cy="4" r="0.6" fill="#f0f0f0"/></g><path d="M2 15.4L9.4 8M5 18.4L12 11.4" fill="none" stroke="#333" stroke-width="1.4"/><path d="M9.6 20.6H18.4M14 14.6V20.6" fill="none" stroke="#333" stroke-width="1.2"/></svg>
<svg class="r" style="left:882.6px;top:184.3px;" width="24" height="24" viewBox="0 0 24 24"><g transform="translate(7.4,1.8)"><path d="M0 4C3 -1.2 11 -1.2 14 4C11 9.2 3 9.2 0 4Z" fill="#333"/><ellipse cx="7" cy="4" rx="3.7" ry="2.7" fill="#f0f0f0"/><circle cx="7" cy="4" r="2.3" fill="#333"/><circle cx="7" cy="4" r="0.6" fill="#f0f0f0"/></g><path d="M5.4 13.6V20.4H12.6" fill="none" stroke="#333" stroke-width="1.2"/><path d="M5.40 11.80L7.00 15.00L3.80 15.00Z" fill="#333"/><path d="M14.60 20.40L11.40 22.00L11.40 18.80Z" fill="#333"/></svg>
<svg class="r" style="left:917px;top:184.8px;" width="24" height="24" viewBox="0 0 24 24"><path d="M2.6 9.2H21.4M2.6 18H21.4M6.4 3.6V22M12 3.6V22M17.6 3.6V22" fill="none" stroke="#333" stroke-width="1.3"/></svg>
<svg class="r" style="left:948px;top:186px;" width="24" height="22" viewBox="0 0 24 22"><path d="M4.6 5V15M7.4 17.6H20" fill="none" stroke="#333" stroke-width="1.2"/><path d="M4.60 1.60L6.80 6.00L2.40 6.00Z" fill="#333"/><path d="M22.00 17.60L17.60 19.60L17.60 15.60Z" fill="#333"/><circle cx="4.6" cy="17.6" r="2.3" fill="#fff" stroke="#333" stroke-width="1.2"/></svg>
<span class="t" style="left:972.5px;top:188.68px;font-size:15.5px;letter-spacing:-1.250px;color:#3a3a3a;">СК 0</span>
<svg class="r" style="left:1028.8px;top:193px;" width="12" height="7" viewBox="0 0 12 7"><path d="M0 0.2H11.6L5.8 6Z" fill="#333"/></svg>
<div class="r" style="left:1047px;top:181px;width:35px;height:32px;background:#f0f0f0;"></div>
<svg class="r" style="left:1052px;top:185px;" width="24" height="24" viewBox="0 0 24 24"><path d="M2.4 20.4H12V2.6H21.2" fill="none" stroke="#333" stroke-width="1.3"/></svg>
<div class="r" style="left:1082px;top:181px;width:32.8px;height:32px;background:#4b4b4b;"></div>
<svg class="r" style="left:1086px;top:185px;" width="26" height="24" viewBox="0 0 26 24"><path d="M5 16.6L20 6.6" stroke="#f6f6f6" stroke-width="1.3"/><circle cx="4.8" cy="16.8" r="2" fill="#4b4b4b" stroke="#f6f6f6" stroke-width="1.2"/><circle cx="20.2" cy="6.4" r="2" fill="#4b4b4b" stroke="#f6f6f6" stroke-width="1.2"/><path d="M6.4 5.699999999999999L8.8 8.6L6.4 11.5L4.0 8.6Z" fill="#4b4b4b" stroke="#f6f6f6" stroke-width="1.1"/><path d="M18.6 15.700000000000001L21.0 18.6L18.6 21.5L16.200000000000003 18.6Z" fill="#4b4b4b" stroke="#f6f6f6" stroke-width="1.1"/></svg>
<svg class="r" style="left:1116px;top:185px;" width="26" height="24" viewBox="0 0 26 24"><path d="M5.6 7.6V20.6M19.4 7.6V20.6M5.6 18.6H17" fill="none" stroke="#333" stroke-width="1.3"/><path d="M19.00 18.60L15.40 20.30L15.40 16.90Z" fill="#333"/><path d="M5.6 1.6999999999999997L8.0 4.6L5.6 7.5L3.1999999999999997 4.6Z" fill="#fff" stroke="#333" stroke-width="1.1"/><path d="M19.4 1.6999999999999997L21.799999999999997 4.6L19.4 7.5L17.0 4.6Z" fill="#fff" stroke="#333" stroke-width="1.1"/><path d="M2.4 4.6H8.8M16.2 4.6H22.6M5.6 1.2V8M19.4 1.2V8" fill="none" stroke="#333" stroke-width="0.9"/></svg>
<span class="t" style="left:1145.6px;top:188.68px;font-size:15.5px;color:#3a3a3a;">1</span>
<svg class="r" style="left:1185.6px;top:193px;" width="12" height="7" viewBox="0 0 12 7"><path d="M0 0.2H11.6L5.8 6Z" fill="#333"/></svg>
<div class="r" style="left:1204px;top:181px;width:60px;height:32px;background:#f0f0f0;"></div>
<svg class="r" style="left:1208px;top:185px;" width="24" height="24" viewBox="0 0 24 24"><rect x="9" y="4.4" width="9.6" height="8" fill="none" stroke="#333" stroke-width="1" stroke-dasharray="1.2 1.2"/><circle cx="9.6" cy="9.4" r="6" fill="none" stroke="#333" stroke-width="1.3"/><path d="M13.6 13.6L20.6 20.4" stroke="#333" stroke-width="2.2"/></svg>
<svg class="r" style="left:1243.6px;top:193px;" width="12" height="7" viewBox="0 0 12 7"><path d="M0 0.2H11.6L5.8 6Z" fill="#333"/></svg>
<svg class="r" style="left:1262px;top:185px;" width="24" height="24" viewBox="0 0 24 24"><circle cx="11" cy="10" r="6.4" fill="none" stroke="#333" stroke-width="1.3"/><path d="M8 8.6H14M11 5.8V11.2M8 13H14" fill="none" stroke="#333" stroke-width="1.1"/><path d="M15.4 14.6L22.4 21" stroke="#333" stroke-width="2.2"/></svg>
<div class="r" style="left:1290px;top:184px;width:33.4px;height:26px;overflow:hidden"><span class="t" style="left:3.5px;top:4.68px;font-size:15.5px;letter-spacing:-0.697px;color:#3a3a3a;">0.402</span></div>
<svg class="r" style="left:1333.6px;top:193px;" width="12" height="7" viewBox="0 0 12 7"><path d="M0 0.2H11.6L5.8 6Z" fill="#333"/></svg>
<div class="r" style="left:1352px;top:181px;width:17.4px;height:32px;background:#e4e4e4;"></div>
<span class="t" style="left:1357.2px;top:188.18px;font-size:15.5px;letter-spacing:-1.339px;color:#3a3a3a;">X</span>
<span class="t" style="left:1377.5px;top:188.68px;font-size:15.5px;letter-spacing:-1.232px;color:#3a3a3a;">392.91</span>
<div class="r" style="left:1424.4px;top:181px;width:17px;height:32px;background:#e4e4e4;"></div>
<span class="t" style="left:1429px;top:188.18px;font-size:15.5px;letter-spacing:-1.939px;color:#3a3a3a;">Y</span>
<div class="r" style="left:1445px;top:184px;width:47.6px;height:26px;overflow:hidden"><span class="t" style="left:4.75px;top:4.68px;font-size:15.5px;letter-spacing:-0.678px;color:#3a3a3a;">-0.8577</span></div>
<div class="r" style="left:1496px;top:181px;width:71px;height:32px;background:#f0f0f0;"></div>
<svg class="r" style="left:1502px;top:185px;" width="26" height="24" viewBox="0 0 26 24"><path d="M2 2H22.6" stroke="#333" stroke-width="1.8"/><path d="M2.4 3.6H22.2" fill="none" stroke="#333" stroke-width="1.4" stroke-dasharray="1.4 1"/><path d="M5.6 2.4V13" fill="none" stroke="#333" stroke-width="1.1"/><path d="M4.6 12.6C4.6 15 7.4 15 7.4 13.4" fill="none" stroke="#333" stroke-width="1"/><rect x="2.6" y="16.2" width="9" height="5.4" fill="none" stroke="#333" stroke-width="1.2"/><path d="M2.6 18.8H11.6M7 16.2V21.6" fill="none" stroke="#333" stroke-width="0.9"/><path d="M14.6 3V22M19.4 3V22M14.6 22H19.4M14.6 4L19.4 9L14.6 14L19.4 19M19.4 4L14.6 9L19.4 14L14.6 19" fill="none" stroke="#333" stroke-width="1.1"/></svg>
<svg class="r" style="left:1537.6px;top:185px;" width="24" height="24" viewBox="0 0 24 24"><path d="M2.4 21.6L4 16L11.6 8.4L15.6 12.4L8 20Z" fill="#f0f0f0" stroke="#333" stroke-width="1.4" stroke-linejoin="round"/><path d="M11 6L18 13" stroke="#333" stroke-width="2.6" stroke-linecap="round"/><path d="M13.6 8.4L17.8 4.2C20.4 1.6 22.6 3.8 20.2 6.6L16 10.8Z" fill="#333" stroke="#333" stroke-width="2" stroke-linejoin="round"/></svg>
<svg class="r" style="left:378px;top:181px" width="1540" height="847" viewBox="378 181 1540 847"><rect x="865.5" y="221.5" width="565" height="798" fill="#fff" stroke="#000" stroke-width="1" shape-rendering="crispEdges"/><rect x="904" y="231" width="517" height="779" fill="none" stroke="#1a82ff" stroke-width="2" shape-rendering="crispEdges"/><path d="M1394 231V364H1421" stroke="#1a82ff" stroke-width="2" fill="none" shape-rendering="crispEdges"/><path d="M904 464H881V692H904M881 578H904M891 464V692" stroke="#1a82ff" stroke-width="2" fill="none" shape-rendering="crispEdges"/><path d="M904 735H881V1010M881 803H904M881 849H904M881 896H904M881 963H904M891 735V1010" stroke="#1a82ff" stroke-width="2" fill="none" shape-rendering="crispEdges"/><path d="M1069 1010V906H1421" stroke="#1a82ff" stroke-width="2" fill="none" shape-rendering="crispEdges"/><path d="M1083 906V953" stroke="#1a82ff" stroke-width="2" fill="none" shape-rendering="crispEdges"/><path d="M1102 906V1010" stroke="#1a82ff" stroke-width="2" fill="none" shape-rendering="crispEdges"/><path d="M1145 906V1010" stroke="#1a82ff" stroke-width="2" fill="none" shape-rendering="crispEdges"/><path d="M1174 906V1010" stroke="#1a82ff" stroke-width="2" fill="none" shape-rendering="crispEdges"/><path d="M1193 906V1010" stroke="#1a82ff" stroke-width="2" fill="none" shape-rendering="crispEdges"/><path d="M1069 944H1193M1069 953H1193" stroke="#1a82ff" stroke-width="2" fill="none" shape-rendering="crispEdges"/><path d="M1069 915.5H1193" stroke="#000" stroke-width="1" fill="none" shape-rendering="crispEdges"/><path d="M1069 925.5H1193" stroke="#000" stroke-width="1" fill="none" shape-rendering="crispEdges"/><path d="M1069 934.5H1193" stroke="#000" stroke-width="1" fill="none" shape-rendering="crispEdges"/><path d="M1069 963.5H1193" stroke="#000" stroke-width="1" fill="none" shape-rendering="crispEdges"/><path d="M1069 972.5H1193" stroke="#000" stroke-width="1" fill="none" shape-rendering="crispEdges"/><path d="M1069 982.5H1193" stroke="#000" stroke-width="1" fill="none" shape-rendering="crispEdges"/><path d="M1069 991.5H1193" stroke="#000" stroke-width="1" fill="none" shape-rendering="crispEdges"/><path d="M1069 1001.5H1193" stroke="#000" stroke-width="1" fill="none" shape-rendering="crispEdges"/><path d="M1193 934H1421M1193 982H1421M1326 934V1010" stroke="#1a82ff" stroke-width="2" fill="none" shape-rendering="crispEdges"/><path d="M1326 944H1421M1326 972H1421M1354 934V972M1387 934V972M1365 972V982" stroke="#1a82ff" stroke-width="2" fill="none" shape-rendering="crispEdges"/><path d="M1335.5 945V971M1344.5 945V971" stroke="#000" stroke-width="1" fill="none" shape-rendering="crispEdges"/><defs><clipPath id="hsec"><path d="M1052 506.6H1066V518.1H1052Z M1085 521.6V506.6H1099.6A68.4 68.4 0 0 1 1146.2 456.28V449.5H1155.4V470.6A51.3 51.3 0 0 0 1115.2 521.6Z M1217.8 521.6A51.3 51.3 0 0 0 1177.6 470.6V449.5H1186.8V456.28A68.4 68.4 0 0 1 1233.4 506.6H1248V521.6Z M1267 506.6H1280.6V518.1H1267Z"/></clipPath></defs><g clip-path="url(#hsec)"><path d="M748.2 530.7L848.2 430.7M756.4 530.7L856.4 430.7M764.6 530.7L864.6 430.7M772.8 530.7L872.8 430.7M781.0 530.7L881.0 430.7M789.2 530.7L889.2 430.7M797.4 530.7L897.4 430.7M805.6 530.7L905.6 430.7M813.8 530.7L913.8 430.7M822.0 530.7L922.0 430.7M830.2 530.7L930.2 430.7M838.4 530.7L938.4 430.7M846.6 530.7L946.6 430.7M854.8 530.7L954.8 430.7M863.0 530.7L963.0 430.7M871.2 530.7L971.2 430.7M879.4 530.7L979.4 430.7M887.6 530.7L987.6 430.7M895.8 530.7L995.8 430.7M904.0 530.7L1004.0 430.7M912.2 530.7L1012.2 430.7M920.4 530.7L1020.4 430.7M928.6 530.7L1028.6 430.7M936.8 530.7L1036.8 430.7M945.0 530.7L1045.0 430.7M953.2 530.7L1053.2 430.7M961.4 530.7L1061.4 430.7M969.6 530.7L1069.6 430.7M977.8 530.7L1077.8 430.7M986.0 530.7L1086.0 430.7M994.2 530.7L1094.2 430.7M1002.4 530.7L1102.4 430.7M1010.6 530.7L1110.6 430.7M1018.8 530.7L1118.8 430.7M1027.0 530.7L1127.0 430.7M1035.2 530.7L1135.2 430.7M1043.4 530.7L1143.4 430.7M1051.6 530.7L1151.6 430.7M1059.8 530.7L1159.8 430.7M1068.0 530.7L1168.0 430.7M1076.2 530.7L1176.2 430.7M1084.4 530.7L1184.4 430.7M1092.6 530.7L1192.6 430.7M1100.8 530.7L1200.8 430.7M1109.0 530.7L1209.0 430.7M1117.2 530.7L1217.2 430.7M1125.4 530.7L1225.4 430.7M1133.6 530.7L1233.6 430.7M1141.8 530.7L1241.8 430.7M1150.0 530.7L1250.0 430.7M1158.2 530.7L1258.2 430.7M1166.4 530.7L1266.4 430.7M1174.6 530.7L1274.6 430.7M1182.8 530.7L1282.8 430.7M1191.0 530.7L1291.0 430.7M1199.2 530.7L1299.2 430.7M1207.4 530.7L1307.4 430.7M1215.6 530.7L1315.6 430.7M1223.8 530.7L1323.8 430.7M1232.0 530.7L1332.0 430.7M1240.2 530.7L1340.2 430.7M1248.4 530.7L1348.4 430.7M1256.6 530.7L1356.6 430.7M1264.8 530.7L1364.8 430.7M1273.0 530.7L1373.0 430.7M1281.2 530.7L1381.2 430.7M1289.4 530.7L1389.4 430.7M1297.6 530.7L1397.6 430.7M1305.8 530.7L1405.8 430.7M1314.0 530.7L1414.0 430.7M1322.2 530.7L1422.2 430.7M1330.4 530.7L1430.4 430.7M1338.6 530.7L1438.6 430.7M1346.8 530.7L1446.8 430.7M1355.0 530.7L1455.0 430.7M1363.2 530.7L1463.2 430.7M1371.4 530.7L1471.4 430.7M1379.6 530.7L1479.6 430.7M1387.8 530.7L1487.8 430.7M1396.0 530.7L1496.0 430.7M1404.2 530.7L1504.2 430.7M1412.4 530.7L1512.4 430.7M1420.6 530.7L1520.6 430.7M1428.8 530.7L1528.8 430.7M1437.0 530.7L1537.0 430.7M1445.2 530.7L1545.2 430.7M1453.4 530.7L1553.4 430.7M1461.6 530.7L1561.6 430.7M1469.8 530.7L1569.8 430.7M1478.0 530.7L1578.0 430.7M1486.2 530.7L1586.2 430.7M1494.4 530.7L1594.4 430.7M1502.6 530.7L1602.6 430.7M1510.8 530.7L1610.8 430.7M1519.0 530.7L1619.0 430.7M1527.2 530.7L1627.2 430.7M1535.4 530.7L1635.4 430.7M1543.6 530.7L1643.6 430.7M1551.8 530.7L1651.8 430.7M1560.0 530.7L1660.0 430.7" stroke="#000" stroke-width="1" fill="none"/></g><rect x="1048.5" y="445.5" width="236" height="79.8" fill="none" stroke="#000" stroke-width="1" stroke-dasharray="2.2 2.2" shape-rendering="crispEdges"/><line x1="1019" y1="521.6" x2="1335" y2="521.6" stroke="#000" stroke-width="1" shape-rendering="crispEdges"/><line x1="1117.2" y1="521.6" x2="1215.8" y2="521.6" stroke="#fff" stroke-width="1.6" shape-rendering="crispEdges"/><line x1="1115.2" y1="521.6" x2="1217.8" y2="521.6" stroke="#000" stroke-width="1" stroke-dasharray="26 3 4 3" shape-rendering="crispEdges"/><line x1="1166.5" y1="444.5" x2="1166.5" y2="521.6" stroke="#000" stroke-width="1" stroke-dasharray="22 3 3 3" shape-rendering="crispEdges"/><path d="M1052 506.6H1099.6A68.4 68.4 0 0 1 1146.2 456.28V449.5H1186.8V456.28A68.4 68.4 0 0 1 1233.4 506.6H1280.6V518.1H1257.5V521.6H1217.8A51.3 51.3 0 0 0 1115.2 521.6H1075.5V518.1H1052Z" stroke="#000" stroke-width="2.2" fill="none" stroke-linejoin="miter"/><line x1="1066" y1="506.6" x2="1066" y2="518.1" stroke="#000" stroke-width="2.2" shape-rendering="crispEdges"/><line x1="1085" y1="506.6" x2="1085" y2="521.6" stroke="#000" stroke-width="2.2" shape-rendering="crispEdges"/><line x1="1248" y1="506.6" x2="1248" y2="521.6" stroke="#000" stroke-width="2.2" shape-rendering="crispEdges"/><line x1="1267" y1="506.6" x2="1267" y2="518.1" stroke="#000" stroke-width="2.2" shape-rendering="crispEdges"/><line x1="1158.3" y1="449.5" x2="1158.3" y2="470" stroke="#000" stroke-width="2.2" shape-rendering="crispEdges"/><line x1="1175.3" y1="449.5" x2="1175.3" y2="470" stroke="#000" stroke-width="2.2" shape-rendering="crispEdges"/><rect x="1157.2" y="468.2" width="19.2" height="3.4" fill="#000" shape-rendering="crispEdges"/><line x1="1155.4" y1="449.5" x2="1155.4" y2="470" stroke="#000" stroke-width="1" shape-rendering="crispEdges"/><line x1="1177.6" y1="449.5" x2="1177.6" y2="470" stroke="#000" stroke-width="1" shape-rendering="crispEdges"/><line x1="1075.5" y1="501" x2="1075.5" y2="527.6" stroke="#000" stroke-width="1" shape-rendering="crispEdges"/><line x1="1257.5" y1="500" x2="1257.5" y2="529.6" stroke="#000" stroke-width="1" shape-rendering="crispEdges"/><line x1="1019" y1="506.6" x2="1052" y2="506.6" stroke="#000" stroke-width="1" shape-rendering="crispEdges"/><line x1="1023.5" y1="494" x2="1023.5" y2="534.6" stroke="#000" stroke-width="1" shape-rendering="crispEdges"/><path d="M1022.80 506.60L1021.70 498.10L1025.30 498.10L1024.20 506.60Z" fill="#000" stroke="#000" stroke-width="0.5"/><path d="M1024.20 521.60L1025.30 530.10L1021.70 530.10L1022.80 521.60Z" fill="#000" stroke="#000" stroke-width="0.5"/><line x1="1186.8" y1="449.5" x2="1334" y2="449.5" stroke="#000" stroke-width="1" shape-rendering="crispEdges"/><line x1="1331" y1="449.5" x2="1331" y2="521.6" stroke="#000" stroke-width="1" shape-rendering="crispEdges"/><path d="M1331.70 449.50L1332.80 458.00L1329.20 458.00L1330.30 449.50Z" fill="#000" stroke="#000" stroke-width="0.5"/><path d="M1330.30 521.60L1329.20 513.10L1332.80 513.10L1331.70 521.60Z" fill="#000" stroke="#000" stroke-width="0.5"/><line x1="1175.3" y1="468.4" x2="1233.8" y2="468.4" stroke="#000" stroke-width="1" shape-rendering="crispEdges"/><line x1="1230.5" y1="420" x2="1230.5" y2="481.4" stroke="#000" stroke-width="1" shape-rendering="crispEdges"/><path d="M1229.80 449.50L1228.70 441.50L1232.30 441.50L1231.20 449.50Z" fill="#000" stroke="#000" stroke-width="0.5"/><path d="M1231.20 468.40L1232.30 476.40L1228.70 476.40L1229.80 468.40Z" fill="#000" stroke="#000" stroke-width="0.5"/><line x1="1280.6" y1="518.1" x2="1305.8" y2="518.1" stroke="#000" stroke-width="1" shape-rendering="crispEdges"/><line x1="1302.4" y1="492" x2="1302.4" y2="534.6" stroke="#000" stroke-width="1" shape-rendering="crispEdges"/><path d="M1301.70 518.10L1301.10 511.10L1303.70 511.10L1303.10 518.10Z" fill="#000" stroke="#000" stroke-width="0.5"/><path d="M1303.10 521.60L1303.70 528.60L1301.10 528.60L1301.70 521.60Z" fill="#000" stroke="#000" stroke-width="0.5"/><line x1="1146.2" y1="395.5" x2="1146.2" y2="449.5" stroke="#000" stroke-width="1" shape-rendering="crispEdges"/><line x1="1186.8" y1="395.5" x2="1186.8" y2="449.5" stroke="#000" stroke-width="1" shape-rendering="crispEdges"/><line x1="1146.2" y1="399.2" x2="1186.8" y2="399.2" stroke="#000" stroke-width="1" shape-rendering="crispEdges"/><path d="M1146.20 398.50L1155.20 397.40L1155.20 401.00L1146.20 399.90Z" fill="#000" stroke="#000" stroke-width="0.5"/><path d="M1186.80 399.90L1177.80 401.00L1177.80 397.40L1186.80 398.50Z" fill="#000" stroke="#000" stroke-width="0.5"/><line x1="1155.4" y1="423" x2="1155.4" y2="449.5" stroke="#000" stroke-width="1" shape-rendering="crispEdges"/><line x1="1177.6" y1="423" x2="1177.6" y2="449.5" stroke="#000" stroke-width="1" shape-rendering="crispEdges"/><line x1="1155.4" y1="426.4" x2="1177.6" y2="426.4" stroke="#000" stroke-width="1" shape-rendering="crispEdges"/><path d="M1155.40 425.70L1163.40 424.60L1163.40 428.20L1155.40 427.10Z" fill="#000" stroke="#000" stroke-width="0.5"/><path d="M1177.60 427.10L1169.60 428.20L1169.60 424.60L1177.60 425.70Z" fill="#000" stroke="#000" stroke-width="0.5"/><line x1="1164.5" y1="521.0" x2="1118.81" y2="502.71" stroke="#000" stroke-width="1" /><path d="M1119.06 502.06L1126.76 504.35L1125.73 506.95L1118.55 503.36Z" fill="#000" stroke="#000" stroke-width="0.5"/><line x1="1167.5" y1="521.0" x2="1223.47" y2="483.75" stroke="#000" stroke-width="1" /><path d="M1223.86 484.34L1217.59 489.34L1216.04 487.01L1223.09 483.17Z" fill="#000" stroke="#000" stroke-width="0.5"/><path d="M1150.4 375L1154.6 359.6L1158.8 375M1151.8 369.6H1157.4M1161 369.6H1169M1172.2 375L1176.5 359.6L1180.8 375M1173.6 369.6H1179.4" stroke="#222" stroke-width="1.25" fill="none" /><rect x="1048.5" y="606.5" width="236" height="163.7" fill="none" stroke="#000" stroke-width="1" stroke-dasharray="2.2 2.2" shape-rendering="crispEdges"/><line x1="1043" y1="688.4" x2="1289" y2="688.4" stroke="#ff8a16" stroke-width="1.4" stroke-dasharray="28 3.5 3.5 3.5" shape-rendering="crispEdges"/><line x1="1063.9" y1="640.6" x2="1090.4" y2="640.6" stroke="#ff8a16" stroke-width="1.1" shape-rendering="crispEdges"/><line x1="1075.4" y1="625.6" x2="1075.4" y2="655.6" stroke="#ff8a16" stroke-width="1.1" shape-rendering="crispEdges"/><line x1="1063.9" y1="735.5" x2="1090.4" y2="735.5" stroke="#ff8a16" stroke-width="1.1" shape-rendering="crispEdges"/><line x1="1075.4" y1="720.5" x2="1075.4" y2="750.5" stroke="#ff8a16" stroke-width="1.1" shape-rendering="crispEdges"/><line x1="1246.0" y1="640.6" x2="1269.0" y2="640.6" stroke="#ff8a16" stroke-width="1.1" shape-rendering="crispEdges"/><line x1="1257.5" y1="629.1" x2="1257.5" y2="652.1" stroke="#ff8a16" stroke-width="1.1" shape-rendering="crispEdges"/><line x1="1246.0" y1="735.5" x2="1269.0" y2="735.5" stroke="#ff8a16" stroke-width="1.1" shape-rendering="crispEdges"/><line x1="1257.5" y1="724.0" x2="1257.5" y2="747.0" stroke="#ff8a16" stroke-width="1.1" shape-rendering="crispEdges"/><line x1="1166.5" y1="662.5" x2="1166.5" y2="714.5" stroke="#ff8a16" stroke-width="1.1" shape-rendering="crispEdges"/><rect x="1052.4" y="610.3" width="228.0" height="155.70000000000005" rx="9.6" ry="9.6" fill="none" stroke="#1a82ff" stroke-width="2.2"/><line x1="1100" y1="610.3" x2="1100" y2="766" stroke="#1a82ff" stroke-width="2" shape-rendering="crispEdges"/><line x1="1233" y1="610.3" x2="1233" y2="766" stroke="#1a82ff" stroke-width="2" shape-rendering="crispEdges"/><circle cx="1075.4" cy="640.6" r="9.7" fill="none" stroke="#1a82ff" stroke-width="1.5"/><circle cx="1075.4" cy="735.5" r="9.7" fill="none" stroke="#1a82ff" stroke-width="1.5"/><circle cx="1257.5" cy="640.6" r="9.7" fill="none" stroke="#1a82ff" stroke-width="1.5"/><circle cx="1257.5" cy="735.5" r="9.7" fill="none" stroke="#1a82ff" stroke-width="1.5"/><circle cx="1166.5" cy="688.4" r="20.2" fill="none" stroke="#1a82ff" stroke-width="1.5"/><path d="M1175.86 693.38A10.6 10.6 0 1 1 1167.24 677.83" fill="none" stroke="#000" stroke-width="1.1"/><circle cx="1166.5" cy="688.4" r="8.5" fill="none" stroke="#1a82ff" stroke-width="1.5"/><circle cx="1166.5" cy="688.4" r="4.4" fill="none" stroke="#1a82ff" stroke-width="1.4"/><circle cx="1166.5" cy="688.4" r="1.9" fill="none" stroke="#1a82ff" stroke-width="1.2"/><rect x="982" y="734" width="23" height="3" fill="#0e908c" shape-rendering="crispEdges"/><rect x="1311" y="734" width="23" height="3" fill="#0e908c" shape-rendering="crispEdges"/><rect x="1121.2" y="687" width="12.6" height="3" fill="#0e908c" shape-rendering="crispEdges"/><rect x="1121.2" y="687" width="2.8" height="12.6" fill="#0e908c" shape-rendering="crispEdges"/><rect x="1198" y="687" width="14" height="3" fill="#0e908c" shape-rendering="crispEdges"/><rect x="1209.2" y="687" width="2.8" height="12.6" fill="#0e908c" shape-rendering="crispEdges"/><rect x="1111" y="734" width="13" height="3" fill="#0e908c" shape-rendering="crispEdges"/><rect x="1121.2" y="724.8" width="2.8" height="12" fill="#0e908c" shape-rendering="crispEdges"/><rect x="1209.2" y="734" width="12" height="3" fill="#0e908c" shape-rendering="crispEdges"/><rect x="1209.2" y="724.8" width="2.8" height="12" fill="#0e908c" shape-rendering="crispEdges"/><line x1="988.5" y1="737" x2="988.5" y2="763.8" stroke="#000" stroke-width="1.2" shape-rendering="crispEdges"/><path d="M989.20 738.50L990.20 748.50L986.80 748.50L987.80 738.50Z" fill="#000" stroke="#000" stroke-width="0.5"/><line x1="1328.3" y1="737" x2="1328.3" y2="763.8" stroke="#000" stroke-width="1.2" shape-rendering="crispEdges"/><path d="M1329.00 738.50L1330.00 748.50L1326.60 748.50L1327.60 738.50Z" fill="#000" stroke="#000" stroke-width="0.5"/><path d="M973.4 763.6L977.8 748.6L982.2 763.6M975 758.6H980.6" stroke="#3a3cff" stroke-width="1.3" fill="none" /><path d="M1333.4 763.6L1337.8 748.6L1342.2 763.6M1335 758.6H1340.6" stroke="#3a3cff" stroke-width="1.3" fill="none" /><line x1="1023" y1="640.6" x2="1075.4" y2="640.6" stroke="#000" stroke-width="1" shape-rendering="crispEdges"/><line x1="1023" y1="735.5" x2="1075.4" y2="735.5" stroke="#000" stroke-width="1" shape-rendering="crispEdges"/><line x1="1027" y1="640.6" x2="1027" y2="735.5" stroke="#000" stroke-width="1" shape-rendering="crispEdges"/><path d="M1027.70 640.60L1028.80 649.10L1025.20 649.10L1026.30 640.60Z" fill="#000" stroke="#000" stroke-width="0.5"/><path d="M1026.30 735.50L1025.20 727.00L1028.80 727.00L1027.70 735.50Z" fill="#000" stroke="#000" stroke-width="0.5"/><line x1="1075.4" y1="735.5" x2="1075.4" y2="805.6" stroke="#000" stroke-width="1" shape-rendering="crispEdges"/><line x1="1257.5" y1="735.5" x2="1257.5" y2="805.6" stroke="#000" stroke-width="1" shape-rendering="crispEdges"/><line x1="1075.4" y1="802.4" x2="1257.5" y2="802.4" stroke="#000" stroke-width="1" shape-rendering="crispEdges"/><path d="M1075.40 801.70L1083.90 800.60L1083.90 804.20L1075.40 803.10Z" fill="#000" stroke="#000" stroke-width="0.5"/><path d="M1257.50 803.10L1249.00 804.20L1249.00 800.60L1257.50 801.70Z" fill="#000" stroke="#000" stroke-width="0.5"/><line x1="1052.5" y1="758" x2="1052.5" y2="838.8" stroke="#000" stroke-width="1" shape-rendering="crispEdges"/><line x1="1280.4" y1="758" x2="1280.4" y2="838.8" stroke="#000" stroke-width="1" shape-rendering="crispEdges"/><line x1="1052.5" y1="836.3" x2="1280.4" y2="836.3" stroke="#000" stroke-width="1" shape-rendering="crispEdges"/><path d="M1052.50 835.60L1061.00 834.50L1061.00 838.10L1052.50 837.00Z" fill="#000" stroke="#000" stroke-width="0.5"/><path d="M1280.40 837.00L1271.90 838.10L1271.90 834.50L1280.40 835.60Z" fill="#000" stroke="#000" stroke-width="0.5"/><path d="M1238.1 630.2L1307.2 668.2" stroke="#000" stroke-width="1" fill="none" /><line x1="1307" y1="668.5" x2="1334" y2="668.5" stroke="#000" stroke-width="1" shape-rendering="crispEdges"/><path d="M1248.66 636.84L1240.34 633.29L1241.89 630.49L1249.34 635.61Z" fill="#000" stroke="#000" stroke-width="0.5"/><path d="M1266.34 644.96L1274.66 648.51L1273.11 651.31L1265.66 646.19Z" fill="#000" stroke="#000" stroke-width="0.5"/></svg>
<span class="t" style="left:1167px;top:389.6px;font-size:10.5px;color:#606060;line-height:1;transform:translate(-50%,-50%) rotate(0deg) scaleX(0.940);font-style:italic;font-weight:normal;">ø21</span>
<span class="t" style="left:1165.2px;top:418.2px;font-size:10.5px;color:#606060;line-height:1;transform:translate(-50%,-50%) rotate(0deg) scaleX(0.832);font-style:italic;font-weight:normal;">M12</span>
<span class="t" style="left:1221.5px;top:430.5px;font-size:10px;color:#606060;line-height:1;transform:translate(-50%,-50%) rotate(-72deg) scaleX(0.809);font-style:italic;font-weight:normal;">10</span>
<span class="t" style="left:1322.5px;top:487px;font-size:10.5px;color:#606060;line-height:1;transform:translate(-50%,-50%) rotate(-90deg) scaleX(0.942);font-style:italic;font-weight:normal;">38</span>
<span class="t" style="left:1295.5px;top:503px;font-size:10.5px;color:#606060;line-height:1;transform:translate(-50%,-50%) rotate(-80deg) scaleX(0.856);font-style:italic;font-weight:normal;">2</span>
<span class="t" style="left:1015.5px;top:515px;font-size:10.5px;color:#606060;line-height:1;transform:translate(-50%,-50%) rotate(-80deg) scaleX(0.942);font-style:italic;font-weight:normal;">8</span>
<span class="t" style="left:1144.4px;top:505px;font-size:10.5px;color:#606060;line-height:1;transform:translate(-50%,-50%) rotate(20deg) scaleX(0.960);font-style:italic;font-weight:normal;">R27</span>
<span class="t" style="left:1189.4px;top:498.4px;font-size:10.5px;color:#606060;line-height:1;transform:translate(-50%,-50%) rotate(-33deg) scaleX(0.883);font-style:italic;font-weight:normal;">R36</span>
<span class="t" style="left:1019.5px;top:689.5px;font-size:10.5px;color:#606060;line-height:1;transform:translate(-50%,-50%) rotate(-90deg) scaleX(1.028);font-style:italic;font-weight:normal;">50</span>
<span class="t" style="left:1166.2px;top:794.6px;font-size:10.5px;color:#606060;line-height:1;transform:translate(-50%,-50%) rotate(0deg) scaleX(0.976);font-style:italic;font-weight:normal;">92</span>
<span class="t" style="left:1166.2px;top:828.4px;font-size:10.5px;color:#606060;line-height:1;transform:translate(-50%,-50%) rotate(0deg) scaleX(0.858);font-style:italic;font-weight:normal;">120±0,435</span>
<span class="t" style="left:1320.6px;top:660px;font-size:10.5px;color:#606060;line-height:1;transform:translate(-50%,-50%) rotate(0deg) scaleX(0.940);font-style:italic;font-weight:normal;">ø10</span>
<span class="t" style="left:1256.6px;top:960px;font-size:23px;color:#222;line-height:1;transform:translate(-50%,-50%) rotate(0deg) scaleX(0.767);font-style:italic;font-weight:normal;">Крышка</span>
<span class="t" style="left:1257.5px;top:997.2px;font-size:14.5px;color:#222;line-height:1;transform:translate(-50%,-50%) rotate(0deg) scaleX(0.680);font-style:italic;font-weight:normal;">Сталь 10  ГОСТ 1050-2013</span>
<span class="t" style="left:1370px;top:958.4px;font-size:10.5px;color:#333;line-height:1;transform:translate(-50%,-50%) rotate(0deg) scaleX(0.949);font-style:italic;font-weight:normal;">0,77</span>
<span class="t" style="left:1403.8px;top:958.4px;font-size:10.5px;color:#f03030;line-height:1;transform:translate(-50%,-50%) rotate(0deg) scaleX(0.713);font-style:italic;font-weight:normal;">1:1</span>
<span class="t" style="left:1075.6px;top:948.6px;font-size:7.5px;color:#444;line-height:1;transform:translate(-50%,-50%) rotate(0deg) scaleX(0.657);font-style:italic;font-weight:normal;">Изм.</span>
<span class="t" style="left:1091.7px;top:948.6px;font-size:7.5px;color:#444;line-height:1;transform:translate(-50%,-50%) rotate(0deg) scaleX(0.715);font-style:italic;font-weight:normal;">Лист</span>
<span class="t" style="left:1122.8px;top:948.6px;font-size:7.5px;color:#444;line-height:1;transform:translate(-50%,-50%) rotate(0deg) scaleX(0.869);font-style:italic;font-weight:normal;">№ докум.</span>
<span class="t" style="left:1159.8px;top:948.6px;font-size:7.5px;color:#444;line-height:1;transform:translate(-50%,-50%) rotate(0deg) scaleX(0.716);font-style:italic;font-weight:normal;">Подп.</span>
<span class="t" style="left:1182.6px;top:948.6px;font-size:7.5px;color:#444;line-height:1;transform:translate(-50%,-50%) rotate(0deg) scaleX(0.723);font-style:italic;font-weight:normal;">Дата</span>
<span class="t" style="left:1081.5px;top:958.6px;font-size:7.5px;color:#444;line-height:1;transform:translate(-50%,-50%) rotate(0deg) scaleX(0.825);font-style:italic;font-weight:normal;">Разраб.</span>
<span class="t" style="left:1119.4px;top:958.6px;font-size:7.5px;color:#444;line-height:1;transform:translate(-50%,-50%) rotate(0deg) scaleX(0.819);font-style:italic;font-weight:normal;">Машанкина</span>
<span class="t" style="left:1182.8px;top:958.6px;font-size:7.5px;color:#444;line-height:1;transform:translate(-50%,-50%) rotate(0deg) scaleX(0.746);font-style:italic;font-weight:normal;">18.05</span>
<span class="t" style="left:1077.8px;top:968px;font-size:7.5px;color:#444;line-height:1;transform:translate(-50%,-50%) rotate(0deg) scaleX(0.758);font-style:italic;font-weight:normal;">Пров.</span>
<span class="t" style="left:1111px;top:968px;font-size:7.5px;color:#444;line-height:1;transform:translate(-50%,-50%) rotate(0deg) scaleX(0.822);font-style:italic;font-weight:normal;">Ксаев</span>
<span class="t" style="left:1082.8px;top:977.8px;font-size:7.5px;color:#444;line-height:1;transform:translate(-50%,-50%) rotate(0deg) scaleX(0.826);font-style:italic;font-weight:normal;">Т.контр.</span>
<span class="t" style="left:1082.8px;top:997px;font-size:7.5px;color:#444;line-height:1;transform:translate(-50%,-50%) rotate(0deg) scaleX(0.787);font-style:italic;font-weight:normal;">Н.контр.</span>
<span class="t" style="left:1077px;top:1006px;font-size:7.5px;color:#444;line-height:1;transform:translate(-50%,-50%) rotate(0deg) scaleX(0.792);font-style:italic;font-weight:normal;">Утв.</span>
<span class="t" style="left:1340px;top:940px;font-size:7.5px;color:#444;line-height:1;transform:translate(-50%,-50%) rotate(0deg) scaleX(0.752);font-style:italic;font-weight:normal;">Лит.</span>
<span class="t" style="left:1369.3px;top:940px;font-size:7.5px;color:#444;line-height:1;transform:translate(-50%,-50%) rotate(0deg) scaleX(0.803);font-style:italic;font-weight:normal;">Масса</span>
<span class="t" style="left:1402.6px;top:940px;font-size:7.5px;color:#444;line-height:1;transform:translate(-50%,-50%) rotate(0deg) scaleX(0.791);font-style:italic;font-weight:normal;">Масштаб</span>
<span class="t" style="left:1336.8px;top:977.8px;font-size:7.5px;color:#444;line-height:1;transform:translate(-50%,-50%) rotate(0deg) scaleX(0.709);font-style:italic;font-weight:normal;">Лист</span>
<span class="t" style="left:1381px;top:977.8px;font-size:7.5px;color:#444;line-height:1;transform:translate(-50%,-50%) rotate(0deg) scaleX(0.835);font-style:italic;font-weight:normal;">Листов</span>
<span class="t" style="left:1409px;top:977.8px;font-size:7.5px;color:#444;line-height:1;transform:translate(-50%,-50%) rotate(0deg) scaleX(0.599);font-style:italic;font-weight:normal;">1</span>
<span class="t" style="left:1372px;top:988px;font-size:7.5px;color:#444;line-height:1;transform:translate(-50%,-50%) rotate(0deg) scaleX(0.854);font-style:italic;font-weight:normal;">Горный университет</span>
<span class="t" style="left:1371.8px;top:997.4px;font-size:7.5px;color:#444;line-height:1;transform:translate(-50%,-50%) rotate(0deg) scaleX(0.972);font-style:italic;font-weight:normal;">Кафедра НГиГ</span>
<span class="t" style="left:1373px;top:1006.6px;font-size:7.5px;color:#444;line-height:1;transform:translate(-50%,-50%) rotate(0deg) scaleX(0.924);font-style:italic;font-weight:normal;">Группа ТХ-18-1</span>
<span class="t" style="left:1228.8px;top:1015.4px;font-size:7.5px;color:#444;line-height:1;transform:translate(-50%,-50%) rotate(0deg) scaleX(0.823);font-style:italic;font-weight:normal;">Копировал</span>
<span class="t" style="left:1358.5px;top:1015.4px;font-size:7.5px;color:#444;line-height:1;transform:translate(-50%,-50%) rotate(0deg) scaleX(0.772);font-style:italic;font-weight:normal;">Формат</span>
<span class="t" style="left:1388px;top:1015.4px;font-size:7.5px;color:#444;line-height:1;transform:translate(-50%,-50%) rotate(0deg) scaleX(0.676);font-style:italic;font-weight:normal;">А3</span>
<span class="t" style="left:886.4px;top:521px;font-size:7.5px;color:#444;line-height:1;transform:translate(-50%,-50%) rotate(-90deg) scaleX(0.762);font-style:italic;font-weight:normal;">Перв. примен.</span>
<span class="t" style="left:886.4px;top:639px;font-size:7.5px;color:#444;line-height:1;transform:translate(-50%,-50%) rotate(-90deg) scaleX(0.763);font-style:italic;font-weight:normal;">Справ. №</span>
<span class="t" style="left:886.4px;top:768.5px;font-size:7.5px;color:#444;line-height:1;transform:translate(-50%,-50%) rotate(-90deg) scaleX(0.767);font-style:italic;font-weight:normal;">Подп. и дата</span>
<span class="t" style="left:886.4px;top:825.5px;font-size:7.5px;color:#444;line-height:1;transform:translate(-50%,-50%) rotate(-90deg) scaleX(0.780);font-style:italic;font-weight:normal;">Инв. № дубл.</span>
<span class="t" style="left:886.4px;top:872.5px;font-size:7.5px;color:#444;line-height:1;transform:translate(-50%,-50%) rotate(-90deg) scaleX(0.776);font-style:italic;font-weight:normal;">Взам. инв. №</span>
<span class="t" style="left:886.4px;top:930.5px;font-size:7.5px;color:#444;line-height:1;transform:translate(-50%,-50%) rotate(-90deg) scaleX(0.852);font-style:italic;font-weight:normal;">Подп. и дата</span>
<span class="t" style="left:886.4px;top:986.6px;font-size:7.5px;color:#444;line-height:1;transform:translate(-50%,-50%) rotate(-90deg) scaleX(0.817);font-style:italic;font-weight:normal;">Инв. № подл.</span>
<div class="r" style="left:0px;top:1027px;width:1920px;height:1px;background:#ffffff;"></div>
<div class="r" style="left:2px;top:1027px;width:376px;height:1px;background:#f8f8f8;"></div>
<div class="r" style="left:0px;top:1028px;width:1920px;height:2.4px;background:#000;"></div>
<div class="r" style="left:0px;top:1030.3px;width:1920px;height:49.7px;background:linear-gradient(90deg,#131926 0%,#151a27 5%,#2b2125 9%,#2b2125 9.5%,#121a26 32%,#111b27 48%,#2a2226 49%,#2e2222 53%,#38241f 56.5%,#2a2124 61%,#161a24 68%,#10151f 78%,#0e141e 100%);"></div>
<svg class="r" style="left:19.5px;top:1044.5px;" width="21" height="21" viewBox="0 0 21 21"><path d="M0.4 3.2L8.4 2V9.8H0.4ZM9.6 1.8L20.4 0.2V9.8H9.6ZM0.4 11H8.4V18.8L0.4 17.6ZM9.6 11H20.4V20.6L9.6 19Z" fill="#fff"/></svg>
<svg class="r" style="left:78px;top:1044px;" width="26" height="24" viewBox="0 0 26 24"><circle cx="15.2" cy="8.6" r="6.4" fill="none" stroke="#fff" stroke-width="1.4"/><path d="M10.6 13.4L2.4 21.4" stroke="#fff" stroke-width="1.6"/></svg>
<svg class="r" style="left:139px;top:1044px;" width="24" height="22" viewBox="0 0 24 22"><path d="M1.4 1V4.2H12.6V1M1.4 20.2V17H12.6V20.2" fill="none" stroke="#fff" stroke-width="1.3"/><rect x="1.4" y="6.4" width="11.2" height="8.4" fill="none" stroke="#fff" stroke-width="1.3"/><path d="M19.4 1V20.2" stroke="#fff" stroke-width="1.3"/><rect x="18" y="7.6" width="2.8" height="2.8" fill="#fff"/></svg>
<div class="r" style="left:180px;top:1030.5px;width:427px;height:49.5px;background:#cacaca;"></div>
<span class="t" style="left:197.5px;top:1045.46px;font-size:18.8px;letter-spacing:0.847px;color:#141414;">Голосовой помощник Алиса</span>
<svg class="r" style="left:568px;top:1040px;" width="20" height="28" viewBox="0 0 20 28"><rect x="6.2" y="1.4" width="7.6" height="15.2" rx="3.8" fill="#111"/><path d="M2.6 12.4C2.6 22 17.4 22 17.4 12.4M10 19.8V26" fill="none" stroke="#111" stroke-width="1.5"/></svg>
<svg class="r" style="left:634px;top:1041.5px;" width="27" height="28" viewBox="0 0 27 28"><path d="M1.2 12.6C2.6 3.6 10.4 -0.4 17.4 2.4C23 4.6 25.4 9.6 25.2 15.8H9.2C9.4 20 14 22.6 19 21.6C21 21.2 22.6 20.6 24 19.6V24.4C14.6 29.4 4.4 24.6 4.6 15.6C4.8 11.4 7.4 8.4 10.6 6.8C6.2 7 3 9.4 1.2 12.6ZM9.4 11.6H18.4C18.4 6.4 10.4 6 9.4 11.6Z" fill="#0a7bd8"/></svg>
<svg class="r" style="left:694px;top:1042px;" width="30" height="25" viewBox="0 0 30 25"><path d="M1 1.4H10L12.6 4H28.4V23H1Z" fill="#ffd96a"/><path d="M1 5.4H28.4V23H1Z" fill="#ffe596"/><rect x="3.2" y="2.2" width="5.6" height="1.6" fill="#fff"/><path d="M6.2 23.6V14.4H23.2V23.6H19.4V18H10V23.6Z" fill="#46a0e2"/></svg>
<div class="r" style="left:684px;top:1077.2px;width:51px;height:2.8px;background:#76b9ed;"></div>
<div class="r" style="left:746.3px;top:1077.2px;width:50.7px;height:2.8px;background:#76b9ed;"></div>
<svg class="r" style="left:755px;top:1039.5px;" width="32" height="32" viewBox="0 0 32 32"><circle cx="15.6" cy="15.6" r="15" fill="#ededed"/><circle cx="15.6" cy="15" r="14.4" fill="#f6f6f6"/><path d="M6.6 7L15.6 17.4V27.4M24.6 7L15.6 17.4" fill="none" stroke="#e11" stroke-width="3.2"/></svg>
<svg class="r" style="left:817.5px;top:1040px;" width="30" height="30" viewBox="0 0 30 30"><circle cx="15" cy="14.8" r="11.8" fill="#00a9ef"/><circle cx="8.6" cy="7.8" r="7" fill="#00b4f4"/><circle cx="21.4" cy="21.6" r="7" fill="#0a86dc"/><path d="M20 10.2C18.6 8 11 7.2 10.8 11.4C10.6 15.6 20 13.8 19.8 18.2C19.6 22.4 11.6 21.8 10 19.2" fill="none" stroke="#fff" stroke-width="3"/></svg>
<div class="r" style="left:865px;top:1030.3px;width:61.3px;height:49.7px;background:#45464f;"></div>
<div class="r" style="left:865px;top:1077.2px;width:61.3px;height:2.8px;background:#76b9ed;"></div>
<svg class="r" style="left:880px;top:1040px;" width="30" height="30" viewBox="0 0 30 30"><rect x="0.8" y="0.8" width="28.4" height="28.4" fill="#2b2b2f" stroke="#11aee8" stroke-width="1.5"/><circle cx="15" cy="15" r="9.8" fill="none" stroke="#11aee8" stroke-width="1.5"/><path d="M11 8.2V22M11 15.6L19.4 8.4M13.6 13.6L21.6 21.4" fill="none" stroke="#11aee8" stroke-width="1.6"/></svg>
<svg class="r" style="left:1562.5px;top:1044px;" width="21" height="21" viewBox="0 0 21 21"><circle cx="13.8" cy="4.6" r="3.4" fill="none" stroke="#fff" stroke-width="1.4"/><path d="M8.6 12.4C9.4 7.6 18.2 7.6 19.4 12.4" fill="none" stroke="#fff" stroke-width="1.4"/><circle cx="6.6" cy="10.6" r="3" fill="#131926" stroke="#fff" stroke-width="1.4"/><path d="M1.4 19.6C2 13.6 10.6 13.4 11.8 19.6" fill="none" stroke="#fff" stroke-width="1.4"/></svg>
<svg class="r" style="left:1609.6px;top:1050px;" width="18" height="10" viewBox="0 0 18 10"><path d="M1 9L8.4 1.4L16 9" fill="none" stroke="#fff" stroke-width="1.4"/></svg>
<svg class="r" style="left:1638.6px;top:1049.6px;" width="21" height="12" viewBox="0 0 21 12"><rect x="0.7" y="0.7" width="17.4" height="10.4" fill="none" stroke="#fff" stroke-width="1.3"/><rect x="18.2" y="3.8" width="1.6" height="4.2" fill="#fff"/><rect x="2.4" y="2.4" width="5.2" height="7" fill="#fff"/></svg>
<svg class="r" style="left:1670px;top:1047px;" width="18" height="17" viewBox="0 0 18 17"><path d="M1.2 15.6C1.4 7.4 7.6 1.4 15.8 1.2" fill="none" stroke="#8d939c" stroke-width="1.3"/><path d="M4.8 15.6C5 9.6 9.6 5 15.8 4.8M8.4 15.6C8.6 11.6 11.6 8.6 15.8 8.4" fill="none" stroke="#fff" stroke-width="1.3"/><circle cx="14" cy="14" r="1.8" fill="#fff"/></svg>
<svg class="r" style="left:1697.4px;top:1045px;" width="22" height="20" viewBox="0 0 22 20"><path d="M1 7H4.6L9 2.8V17.2L4.6 13H1Z" fill="none" stroke="#fff" stroke-width="1.3"/><path d="M11.6 7.6C12.8 9 12.8 11 11.6 12.4" fill="none" stroke="#fff" stroke-width="1.2"/><path d="M14.4 5.2C16.6 7.8 16.6 12.2 14.4 14.8M17.2 2.6C21 7 21 13 17.2 17.4" fill="none" stroke="#7b818b" stroke-width="1.2"/></svg>
<span class="t" style="left:1732.5px;top:1047.54px;font-size:14.8px;letter-spacing:-2.168px;color:#fff;">РУС</span>
<span class="t" style="left:1794px;top:1035.26px;font-size:15.2px;letter-spacing:-1.009px;color:#fff;">12:38</span>
<span class="t" style="left:1776.2px;top:1058.46px;font-size:15.2px;letter-spacing:-0.697px;color:#fff;">01.07.2019</span>
<svg class="r" style="left:1868.5px;top:1044.5px;" width="22" height="19" viewBox="0 0 22 19"><path d="M0.4 0.4H20.8V14.6H9.6L5.4 18.2V14.6H0.4Z" fill="#fff"/><path d="M4.4 4.2H16.8M4.4 7.4H16.8M4.4 10.6H16.8" stroke="#131926" stroke-width="1"/></svg>
<svg class="r" style="left:1878.5px;top:1054.5px;" width="20" height="20" viewBox="0 0 20 20"><circle cx="10" cy="10" r="9.2" fill="#3a3a3e" stroke="#6c6c70" stroke-width="1.1"/></svg>
<span class="t" style="left:1884.4px;top:1057.53px;font-size:14.5px;color:#fff;font-weight:bold;">2</span>
<div class="r" style="left:1914.6px;top:1031px;width:1px;height:49px;background:#50545c;"></div>
</body></html>
